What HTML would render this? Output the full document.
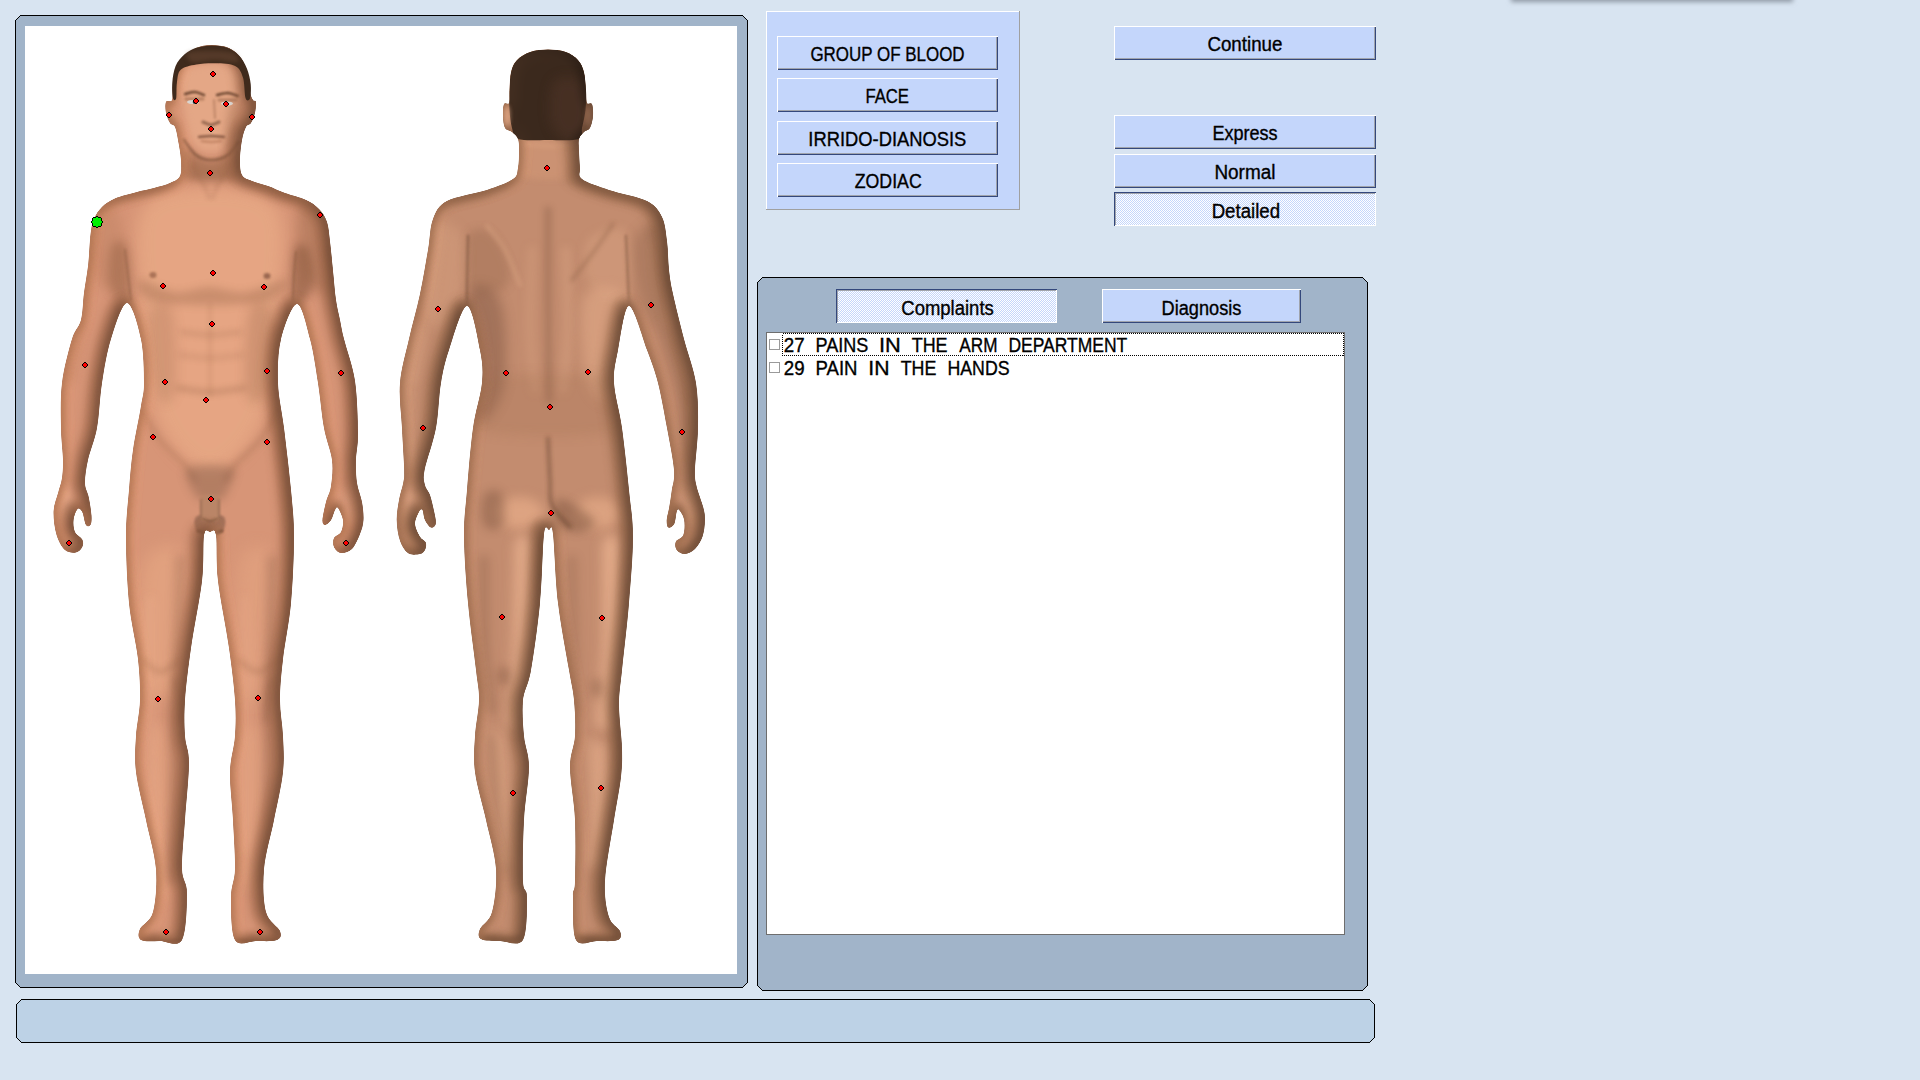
<!DOCTYPE html>
<html><head><meta charset="utf-8"><style>
html,body{margin:0;padding:0;width:1920px;height:1080px;overflow:hidden;background:#d8e4f1;font-family:"Liberation Sans",sans-serif;}
.abs{position:absolute}
.btn{position:absolute;box-sizing:border-box;display:flex;align-items:center;justify-content:center;color:#000;white-space:nowrap}
.pressed{background-color:#c4d6fb;background-image:repeating-conic-gradient(#ffffff 0 25%, #c4d6fb 0 50%);background-size:2px 2px}
.item{position:absolute;font-size:18.5px;color:#000;white-space:pre;line-height:23px}
</style></head><body>
<svg width="1920" height="1080" style="position:absolute;left:0;top:0" shape-rendering="crispEdges">
 <defs><linearGradient id="sh" x1="0" y1="0" x2="0" y2="1"><stop offset="0" stop-color="#9aa4b0"/><stop offset="1" stop-color="#d8e4f1"/></linearGradient>
 <filter id="shb" filterUnits="userSpaceOnUse" x="1400" y="-50" width="500" height="100"><feGaussianBlur stdDeviation="2.8"/></filter></defs>
 <rect x="1511" y="-12" width="282" height="14" fill="#8e98a4" filter="url(#shb)"/>
 <polygon points="20.5,15.5 742.5,15.5 747.5,20.5 747.5,982.5 742.5,987.5 20.5,987.5 15.5,982.5 15.5,20.5" fill="#a1b4c9" stroke="#000" stroke-width="1"/>
 <rect x="25" y="26" width="712" height="948" fill="#fff"/>
 <polygon points="762.5,277.5 1362.5,277.5 1367.5,282.5 1367.5,985.5 1362.5,990.5 762.5,990.5 757.5,985.5 757.5,282.5" fill="#a1b4c9" stroke="#000" stroke-width="1"/>
 <rect x="766" y="332" width="579" height="603" fill="#6e6e6e"/>
 <rect x="767" y="333" width="577" height="601" fill="#fff"/>
 <polygon points="21.5,999.5 1369.5,999.5 1374.5,1004.5 1374.5,1037.5 1369.5,1042.5 21.5,1042.5 16.5,1037.5 16.5,1004.5" fill="#bdd2e6" stroke="#000" stroke-width="1"/>
 <rect x="766" y="11" width="254" height="199" fill="#a0a0a0"/>
 <rect x="766" y="11" width="253" height="198" fill="#fff"/>
 <rect x="767" y="12" width="252" height="197" fill="#c4d6fb"/>
</svg>

<svg width="1920" height="1080" style="position:absolute;left:0;top:0">
<defs>
 <clipPath id="cf"><path d="M211.0,45.0C216.5,45.0 224.0,45.8 229.0,48.0C234.0,50.2 237.8,53.7 241.0,58.0C244.2,62.3 246.5,68.3 248.0,74.0C249.5,79.7 249.2,87.7 250.0,92.0C250.8,96.3 252.0,98.3 253.0,100.0C254.0,101.7 255.7,99.8 256.0,102.0C256.3,104.2 255.8,109.5 255.0,113.0C254.2,116.5 252.5,120.7 251.0,123.0C249.5,125.3 247.5,124.2 246.0,127.0C244.5,129.8 243.0,134.5 242.0,140.0C241.0,145.5 240.0,154.2 240.0,160.0C240.0,165.8 240.0,171.5 242.0,175.0C244.0,178.5 247.7,179.2 252.0,181.0C256.3,182.8 262.5,184.0 268.0,186.0C273.5,188.0 278.7,190.7 285.0,193.0C291.3,195.3 300.3,197.3 306.0,200.0C311.7,202.7 315.5,205.3 319.0,209.0C322.5,212.7 325.2,216.6 327.0,222.0C328.8,227.4 329.0,233.3 330.0,241.5C331.0,249.7 332.0,261.2 333.0,271.0C334.0,280.8 334.8,291.8 336.0,300.0C337.2,308.2 338.7,313.5 340.0,320.0C341.3,326.5 341.5,328.8 344.0,339.0C346.5,349.2 352.7,365.3 355.0,381.0C357.3,396.7 357.8,419.8 358.0,433.0C358.2,446.2 356.2,451.7 356.0,460.0C355.8,468.3 356.0,476.0 357.0,483.0C358.0,490.0 360.9,495.8 362.0,502.0C363.1,508.2 363.8,514.7 363.5,520.0C363.2,525.3 361.9,529.2 360.0,534.0C358.1,538.8 355.2,545.8 352.0,549.0C348.8,552.2 344.0,553.3 341.0,553.0C338.0,552.7 335.2,549.5 334.0,547.0C332.8,544.5 332.8,540.5 334.0,538.0C335.2,535.5 339.5,535.0 341.0,532.0C342.5,529.0 343.5,524.0 343.0,520.0C342.5,516.0 339.3,509.7 338.0,508.0C336.7,506.3 336.2,508.0 335.0,510.0C333.8,512.0 332.7,517.5 331.0,520.0C329.3,522.5 326.4,525.0 325.0,525.0C323.6,525.0 322.3,523.8 322.5,520.0C322.7,516.2 324.6,507.7 326.0,502.0C327.4,496.3 330.0,493.0 331.0,486.0C332.0,479.0 333.2,469.7 332.0,460.0C330.8,450.3 326.3,440.8 324.0,428.0C321.7,415.2 320.3,397.8 318.0,383.0C315.7,368.2 313.5,352.2 310.0,339.0C306.5,325.8 301.8,304.0 297.0,304.0C292.2,304.0 284.2,325.8 281.0,339.0C277.8,352.2 277.5,368.2 278.0,383.0C278.5,397.8 281.8,410.2 284.0,428.0C286.2,445.8 289.3,471.8 291.0,490.0C292.7,508.2 294.0,518.2 294.0,537.0C294.0,555.8 292.8,582.7 291.0,603.0C289.2,623.3 284.8,642.8 283.0,659.0C281.2,675.2 280.0,687.2 280.0,700.0C280.0,712.8 282.5,724.0 283.0,736.0C283.5,748.0 284.5,758.0 283.0,772.0C281.5,786.0 277.2,803.8 274.0,820.0C270.8,836.2 265.3,853.7 264.0,869.0C262.7,884.3 263.3,901.7 266.0,912.0C268.7,922.3 278.2,926.3 280.0,931.0C281.8,935.7 281.0,938.3 277.0,940.0C273.0,941.7 263.0,941.0 256.0,941.0C249.0,941.0 239.2,947.3 235.0,940.0C230.8,932.7 231.0,908.8 231.0,897.0C231.0,885.2 234.7,881.8 235.0,869.0C235.3,856.2 233.8,836.2 233.0,820.0C232.2,803.8 229.7,786.0 230.0,772.0C230.3,758.0 234.2,748.0 235.0,736.0C235.8,724.0 236.0,714.7 235.0,700.0C234.0,685.3 231.8,667.8 229.0,648.0C226.2,628.2 220.2,599.8 218.0,581.0C215.8,562.2 217.3,543.2 216.0,535.0C214.7,526.8 212.0,532.0 210.0,532.0C208.0,532.0 205.3,526.8 204.0,535.0C202.7,543.2 204.2,562.2 202.0,581.0C199.8,599.8 193.8,628.2 191.0,648.0C188.2,667.8 186.0,685.3 185.0,700.0C184.0,714.7 184.3,725.5 185.0,736.0C185.7,746.5 189.0,749.0 189.0,763.0C189.0,777.0 186.2,802.3 185.0,820.0C183.8,837.7 181.7,856.8 182.0,869.0C182.3,881.2 187.0,881.2 187.0,893.0C187.0,904.8 186.5,932.0 182.0,940.0C177.5,948.0 166.8,941.0 160.0,941.0C153.2,941.0 144.3,942.0 141.0,940.0C137.7,938.0 138.0,933.7 140.0,929.0C142.0,924.3 150.3,922.0 153.0,912.0C155.7,902.0 157.2,884.3 156.0,869.0C154.8,853.7 149.3,836.2 146.0,820.0C142.7,803.8 137.7,786.0 136.0,772.0C134.3,758.0 135.3,748.0 136.0,736.0C136.7,724.0 139.7,712.8 140.0,700.0C140.3,687.2 139.8,675.2 138.0,659.0C136.2,642.8 131.0,623.3 129.0,603.0C127.0,582.7 126.0,555.8 126.0,537.0C126.0,518.2 127.8,504.5 129.0,490.0C130.2,475.5 131.0,464.0 133.0,450.0C135.0,436.0 139.2,417.2 141.0,406.0C142.8,394.8 144.0,394.2 144.0,383.0C144.0,371.8 143.8,352.3 141.0,339.0C138.2,325.7 132.0,303.0 127.0,303.0C122.0,303.0 115.2,325.7 111.0,339.0C106.8,352.3 104.3,368.2 102.0,383.0C99.7,397.8 99.3,415.2 97.0,428.0C94.7,440.8 90.0,450.8 88.0,460.0C86.0,469.2 84.9,476.8 85.0,483.0C85.1,489.2 87.6,491.6 88.7,497.0C89.8,502.4 91.2,511.0 91.5,515.6C91.8,520.2 91.5,523.2 90.6,524.8C89.7,526.4 87.4,527.1 86.0,525.0C84.6,522.9 83.7,514.7 82.3,512.0C80.9,509.3 79.1,507.7 77.6,509.0C76.1,510.3 73.9,516.2 73.5,520.0C73.1,523.8 73.5,528.7 75.0,532.0C76.5,535.3 81.1,537.1 82.3,539.6C83.5,542.1 83.4,544.8 82.3,547.0C81.2,549.2 78.7,552.1 75.8,552.6C72.9,553.1 68.0,552.9 64.7,549.8C61.5,546.7 58.1,540.5 56.3,534.0C54.4,527.5 53.3,517.9 53.6,511.0C53.9,504.1 56.8,497.8 58.2,492.4C59.6,487.0 61.1,483.9 61.9,478.5C62.7,473.1 63.1,468.4 63.0,460.0C62.9,451.6 61.2,440.8 61.0,428.0C60.8,415.2 60.2,397.8 62.0,383.0C63.8,368.2 68.8,349.5 72.0,339.0C75.2,328.5 79.0,327.7 81.0,320.0C83.0,312.3 82.8,302.3 84.0,293.0C85.2,283.7 87.2,273.8 88.3,264.0C89.4,254.2 89.6,241.5 90.6,234.0C91.5,226.5 92.1,223.5 94.0,219.0C95.9,214.5 98.5,210.4 102.0,207.0C105.5,203.6 109.2,201.0 115.0,198.5C120.8,196.0 130.5,193.8 137.0,192.0C143.5,190.2 148.5,189.5 154.0,188.0C159.5,186.5 165.7,185.0 170.0,183.0C174.3,181.0 178.2,179.8 180.0,176.0C181.8,172.2 181.3,166.0 181.0,160.0C180.7,154.0 179.0,145.5 178.0,140.0C177.0,134.5 176.3,129.8 175.0,127.0C173.7,124.2 171.5,125.3 170.0,123.0C168.5,120.7 166.7,116.5 166.0,113.0C165.3,109.5 165.0,104.2 166.0,102.0C167.0,99.8 170.8,102.8 172.0,100.0C173.2,97.2 172.0,90.3 173.0,85.0C174.0,79.7 176.2,72.7 178.0,68.0C179.8,63.3 181.0,60.3 184.0,57.0C187.0,53.7 191.5,50.0 196.0,48.0C200.5,46.0 205.5,45.0 211.0,45.0Z"/></clipPath>
 <clipPath id="cb"><path d="M548.0,49.5C554.0,49.5 561.0,50.2 566.0,52.0C571.0,53.8 575.0,56.7 578.0,60.0C581.0,63.3 582.7,67.0 584.0,72.0C585.3,77.0 585.5,84.8 586.0,90.0C586.5,95.2 586.0,100.7 587.0,103.0C588.0,105.3 591.0,101.8 592.0,104.0C593.0,106.2 593.3,112.0 593.0,116.0C592.7,120.0 591.5,125.3 590.0,128.0C588.5,130.7 585.8,130.2 584.0,132.0C582.2,133.8 579.8,135.8 579.0,139.0C578.2,142.2 578.8,146.2 579.0,151.0C579.2,155.8 579.5,163.3 580.0,168.0C580.5,172.7 577.2,175.3 582.0,179.0C586.8,182.7 598.2,186.3 609.0,190.0C619.8,193.7 638.2,196.5 647.0,201.0C655.8,205.5 658.7,210.3 662.0,217.0C665.3,223.7 665.8,232.2 667.0,241.0C668.2,249.8 668.0,261.2 669.0,270.0C670.0,278.8 670.5,282.5 673.0,294.0C675.5,305.5 680.2,324.2 684.0,339.0C687.8,353.8 693.7,368.2 696.0,383.0C698.3,397.8 698.2,413.5 698.0,428.0C697.8,442.5 695.2,460.2 695.0,470.0C694.8,479.8 695.3,480.4 696.7,486.7C698.1,492.9 701.9,501.9 703.3,507.5C704.7,513.0 705.1,515.1 705.0,520.0C704.9,524.9 704.2,531.9 702.5,536.7C700.8,541.5 697.9,546.1 695.0,549.0C692.1,551.9 688.0,553.8 685.0,554.0C682.0,554.2 678.2,552.0 676.7,550.0C675.2,548.0 674.7,544.2 675.8,541.7C676.9,539.2 681.9,538.6 683.3,535.0C684.7,531.4 684.9,524.2 684.2,520.0C683.5,515.8 680.5,511.4 679.2,510.0C678.0,508.6 677.5,509.4 676.7,511.7C675.9,514.0 675.6,521.4 674.2,524.0C672.8,526.6 669.5,528.2 668.3,527.5C667.0,526.8 666.6,523.3 666.7,520.0C666.9,516.7 668.4,512.4 669.2,507.5C670.0,502.6 670.9,497.1 671.7,490.8C672.5,484.6 674.8,480.5 674.0,470.0C673.2,459.5 669.7,442.5 667.0,428.0C664.3,413.5 661.3,396.0 658.0,383.0C654.7,370.0 651.8,362.8 647.0,350.0C642.2,337.2 633.8,306.0 629.0,306.0C624.2,306.0 620.5,337.2 618.0,350.0C615.5,362.8 613.3,370.0 614.0,383.0C614.7,396.0 619.5,410.2 622.0,428.0C624.5,445.8 627.2,471.8 629.0,490.0C630.8,508.2 633.0,518.2 633.0,537.0C633.0,555.8 630.8,580.8 629.0,603.0C627.2,625.2 623.7,653.0 622.0,670.0C620.3,687.0 619.0,692.0 619.0,705.0C619.0,718.0 621.7,736.0 622.0,748.0C622.3,760.0 622.3,765.0 621.0,777.0C619.7,789.0 616.7,802.7 614.0,820.0C611.3,837.3 605.8,864.8 605.0,881.0C604.2,897.2 606.5,908.7 609.0,917.0C611.5,925.3 618.5,927.2 620.0,931.0C621.5,934.8 621.8,938.3 618.0,940.0C614.2,941.7 604.0,941.0 597.0,941.0C590.0,941.0 580.0,947.3 576.0,940.0C572.0,932.7 573.2,906.8 573.0,897.0C572.8,887.2 574.7,893.8 575.0,881.0C575.3,868.2 575.8,839.0 575.0,820.0C574.2,801.0 570.0,781.0 570.0,767.0C570.0,753.0 574.3,747.2 575.0,736.0C575.7,724.8 575.0,711.0 574.0,700.0C573.0,689.0 571.7,686.2 569.0,670.0C566.3,653.8 560.7,625.7 558.0,603.0C555.3,580.3 554.5,546.2 553.0,534.0C551.5,521.8 550.5,530.0 549.0,530.0C547.5,530.0 545.5,521.8 544.0,534.0C542.5,546.2 542.2,580.3 540.0,603.0C537.8,625.7 533.8,653.8 531.0,670.0C528.2,686.2 524.2,689.0 523.0,700.0C521.8,711.0 523.0,724.8 524.0,736.0C525.0,747.2 529.0,753.0 529.0,767.0C529.0,781.0 525.0,801.0 524.0,820.0C523.0,839.0 522.5,868.2 523.0,881.0C523.5,893.8 527.0,887.2 527.0,897.0C527.0,906.8 527.5,932.7 523.0,940.0C518.5,947.3 507.0,941.2 500.0,941.0C493.0,940.8 484.3,941.0 481.0,939.0C477.7,937.0 478.2,933.5 480.0,929.0C481.8,924.5 489.3,922.0 492.0,912.0C494.7,902.0 497.0,884.3 496.0,869.0C495.0,853.7 489.5,836.2 486.0,820.0C482.5,803.8 476.8,786.0 475.0,772.0C473.2,758.0 474.3,748.0 475.0,736.0C475.7,724.0 478.8,711.0 479.0,700.0C479.2,689.0 477.8,686.2 476.0,670.0C474.2,653.8 470.0,625.2 468.0,603.0C466.0,580.8 464.2,555.8 464.0,537.0C463.8,518.2 465.5,508.2 467.0,490.0C468.5,471.8 470.5,445.8 473.0,428.0C475.5,410.2 480.8,396.0 482.0,383.0C483.2,370.0 482.5,362.8 480.0,350.0C477.5,337.2 472.2,306.0 467.0,306.0C461.8,306.0 453.3,337.2 449.0,350.0C444.7,362.8 443.2,370.0 441.0,383.0C438.8,396.0 438.7,413.5 436.0,428.0C433.3,442.5 426.4,460.5 424.6,470.0C422.8,479.5 424.1,480.8 425.0,485.0C425.9,489.2 428.5,490.6 430.0,495.0C431.5,499.4 433.2,506.9 434.2,511.7C435.2,516.5 436.4,521.4 435.8,524.0C435.2,526.6 432.6,528.2 430.8,527.5C429.0,526.8 426.4,522.9 425.0,520.0C423.6,517.1 423.5,511.4 422.5,510.0C421.5,508.6 420.2,509.4 419.0,511.7C417.8,514.0 414.8,519.8 415.0,524.0C415.2,528.2 418.2,533.6 420.0,536.7C421.8,539.8 425.0,540.3 425.8,542.5C426.6,544.7 426.0,548.1 425.0,550.0C424.0,551.9 422.8,553.5 420.0,554.0C417.2,554.5 411.6,555.5 408.3,553.3C405.0,551.1 401.9,546.3 400.0,540.8C398.1,535.2 396.8,527.0 396.7,520.0C396.6,513.0 398.1,505.2 399.2,499.0C400.3,492.8 402.5,487.3 403.3,482.5C404.1,477.7 404.4,479.1 404.2,470.0C404.0,460.9 402.7,442.5 402.0,428.0C401.3,413.5 398.8,397.8 400.0,383.0C401.2,368.2 405.7,353.8 409.0,339.0C412.3,324.2 416.8,308.8 420.0,294.0C423.2,279.2 425.8,262.5 428.0,250.0C430.2,237.5 429.8,227.2 433.0,219.0C436.2,210.8 438.0,205.8 447.0,201.0C456.0,196.2 476.0,193.7 487.0,190.0C498.0,186.3 507.8,182.7 513.0,179.0C518.2,175.3 517.0,172.7 518.0,168.0C519.0,163.3 519.0,155.8 519.0,151.0C519.0,146.2 519.2,142.2 518.0,139.0C516.8,135.8 514.2,133.8 512.0,132.0C509.8,130.2 506.5,130.7 505.0,128.0C503.5,125.3 503.2,120.0 503.0,116.0C502.8,112.0 503.0,106.2 504.0,104.0C505.0,101.8 508.1,105.3 509.0,103.0C509.9,100.7 509.2,95.2 509.5,90.0C509.8,84.8 509.8,77.0 511.0,72.0C512.2,67.0 513.8,63.3 517.0,60.0C520.2,56.7 524.8,53.8 530.0,52.0C535.2,50.2 542.0,49.5 548.0,49.5Z"/></clipPath>
 <filter id="bl1" filterUnits="userSpaceOnUse" x="0" y="0" width="1920" height="1080"><feGaussianBlur stdDeviation="1"/></filter>
 <filter id="bl2" filterUnits="userSpaceOnUse" x="0" y="0" width="1920" height="1080"><feGaussianBlur stdDeviation="2"/></filter>
 <filter id="bl3" filterUnits="userSpaceOnUse" x="0" y="0" width="1920" height="1080"><feGaussianBlur stdDeviation="3"/></filter>
 <filter id="bl4" filterUnits="userSpaceOnUse" x="0" y="0" width="1920" height="1080"><feGaussianBlur stdDeviation="4"/></filter>
 <filter id="bl5" filterUnits="userSpaceOnUse" x="0" y="0" width="1920" height="1080"><feGaussianBlur stdDeviation="5"/></filter>
 <filter id="bl6" filterUnits="userSpaceOnUse" x="0" y="0" width="1920" height="1080"><feGaussianBlur stdDeviation="6"/></filter>
 <filter id="bl7" filterUnits="userSpaceOnUse" x="0" y="0" width="1920" height="1080"><feGaussianBlur stdDeviation="7"/></filter>
 <filter id="bl8" filterUnits="userSpaceOnUse" x="0" y="0" width="1920" height="1080"><feGaussianBlur stdDeviation="8"/></filter>
 <filter id="bl9" filterUnits="userSpaceOnUse" x="0" y="0" width="1920" height="1080"><feGaussianBlur stdDeviation="9"/></filter>
 <filter id="bl10" filterUnits="userSpaceOnUse" x="0" y="0" width="1920" height="1080"><feGaussianBlur stdDeviation="10"/></filter>
 <filter id="lit" filterUnits="userSpaceOnUse" x="0" y="0" width="1920" height="1080" color-interpolation-filters="sRGB">
  <feGaussianBlur in="SourceAlpha" stdDeviation="6" result="b"/>
  <feDiffuseLighting in="b" surfaceScale="3" diffuseConstant="1" lighting-color="#fff" result="light">
   <feDistantLight azimuth="190" elevation="65"/>
  </feDiffuseLighting>
  <feComposite in="SourceGraphic" in2="light" operator="arithmetic" k1="1.0" k2="0.1" k3="0" k4="0" result="lit"/>
  <feComposite in="lit" in2="SourceAlpha" operator="in"/>
 </filter>
</defs>
<g filter="url(#lit)"><g clip-path="url(#cf)">
 <rect x="40" y="40" width="340" height="910" fill="#d69476"/>
 <path d="M150.0,200.0C171.7,183.3 248.3,183.3 270.0,200.0C291.7,216.7 281.3,263.3 280.0,300.0C278.7,336.7 273.7,391.7 262.0,420.0C250.3,448.3 227.3,470.0 210.0,470.0C192.7,470.0 169.7,448.3 158.0,420.0C146.3,391.7 141.3,336.7 140.0,300.0C138.7,263.3 128.3,216.7 150.0,200.0Z" fill="#eeb08a" filter="url(#bl8)" opacity="0.6"/><path d="M145.0,560.0C152.5,543.3 179.2,540.0 185.0,560.0C190.8,580.0 184.2,656.7 180.0,680.0C175.8,703.3 166.7,703.3 160.0,700.0C153.3,696.7 142.5,683.3 140.0,660.0C137.5,636.7 137.5,576.7 145.0,560.0Z" fill="#eaac86" filter="url(#bl8)" opacity="0.5"/><path d="M240.0,560.0C246.2,540.0 270.0,543.3 275.0,560.0C280.0,576.7 273.3,636.7 270.0,660.0C266.7,683.3 260.3,696.7 255.0,700.0C249.7,703.3 240.5,703.3 238.0,680.0C235.5,656.7 233.8,580.0 240.0,560.0Z" fill="#eaac86" filter="url(#bl8)" opacity="0.4"/><path d="M150.0,740.0C153.7,720.0 168.7,716.7 172.0,740.0C175.3,763.3 172.3,853.3 170.0,880.0C167.7,906.7 161.3,903.3 158.0,900.0C154.7,896.7 151.3,886.7 150.0,860.0C148.7,833.3 146.3,760.0 150.0,740.0Z" fill="#eaac86" filter="url(#bl6)" opacity="0.4"/><path d="M242.0,740.0C246.2,720.0 261.7,720.0 265.0,740.0C268.3,760.0 264.5,835.0 262.0,860.0C259.5,885.0 253.7,890.0 250.0,890.0C246.3,890.0 241.3,885.0 240.0,860.0C238.7,835.0 237.8,760.0 242.0,740.0Z" fill="#eaac86" filter="url(#bl6)" opacity="0.35"/><path d="M140.0,280.0C144.3,278.7 164.5,290.8 176.0,292.0C187.5,293.2 197.7,287.0 209.0,287.0C220.3,287.0 231.3,293.2 244.0,292.0C256.7,290.8 280.7,278.7 285.0,280.0C289.3,281.3 282.5,295.8 270.0,300.0C257.5,304.2 230.0,305.0 210.0,305.0C190.0,305.0 161.7,304.2 150.0,300.0C138.3,295.8 135.7,281.3 140.0,280.0Z" fill="#8a5a3e" filter="url(#bl4)" opacity="0.3"/><ellipse cx="153" cy="275" rx="3.5" ry="3" fill="#7a4a34" filter="url(#bl1)" opacity="0.55"/><ellipse cx="267" cy="276" rx="3.5" ry="3" fill="#6a4030" filter="url(#bl1)" opacity="0.6"/><path d="M182.0,332.0C186.7,332.5 200.3,335.0 210.0,335.0C219.7,335.0 235.0,332.5 240.0,332.0" fill="none" stroke="#8a5a3e" stroke-width="4" stroke-linecap="round" filter="url(#bl3)" opacity="0.25"/><path d="M180.0,355.0C185.0,355.5 199.7,358.0 210.0,358.0C220.3,358.0 236.7,355.5 242.0,355.0" fill="none" stroke="#8a5a3e" stroke-width="4" stroke-linecap="round" filter="url(#bl3)" opacity="0.2"/><path d="M178.0,388.0C183.3,388.7 199.0,392.0 210.0,392.0C221.0,392.0 238.3,388.7 244.0,388.0" fill="none" stroke="#8a5a3e" stroke-width="5" stroke-linecap="round" filter="url(#bl3)" opacity="0.3"/><path d="M210.0,305.0C210.0,320.0 210.0,380.0 210.0,395.0" fill="none" stroke="#8a5a3e" stroke-width="3" stroke-linecap="round" filter="url(#bl2)" opacity="0.15"/><path d="M150.0,310.0C154.0,301.7 167.8,296.7 172.0,310.0C176.2,323.3 177.0,375.0 175.0,390.0C173.0,405.0 164.5,405.0 160.0,400.0C155.5,395.0 149.7,375.0 148.0,360.0C146.3,345.0 146.0,318.3 150.0,310.0Z" fill="#8a5a3e" filter="url(#bl6)" opacity="0.2"/><path d="M250.0,310.0C254.3,296.7 268.0,301.7 272.0,310.0C276.0,318.3 275.7,345.0 274.0,360.0C272.3,375.0 266.7,395.0 262.0,400.0C257.3,405.0 248.0,405.0 246.0,390.0C244.0,375.0 245.7,323.3 250.0,310.0Z" fill="#8a5a3e" filter="url(#bl6)" opacity="0.25"/><path d="M142.0,410.0C145.0,415.0 152.8,430.8 160.0,440.0C167.2,449.2 179.2,458.3 185.0,465.0C190.8,471.7 193.3,477.5 195.0,480.0" fill="none" stroke="#8a5a3e" stroke-width="4" stroke-linecap="round" filter="url(#bl3)" opacity="0.3"/><path d="M278.0,410.0C275.0,415.0 267.2,430.8 260.0,440.0C252.8,449.2 240.7,458.3 235.0,465.0C229.3,471.7 227.5,477.5 226.0,480.0" fill="none" stroke="#8a5a3e" stroke-width="4" stroke-linecap="round" filter="url(#bl3)" opacity="0.35"/><path d="M112.0,245.0C115.2,239.7 123.8,238.8 127.0,248.0C130.2,257.2 132.5,291.3 131.0,300.0C129.5,308.7 121.8,303.3 118.0,300.0C114.2,296.7 109.0,289.2 108.0,280.0C107.0,270.8 108.8,250.3 112.0,245.0Z" fill="#8a5a3e" filter="url(#bl5)" opacity="0.45"/><path d="M308.0,248.0C304.7,243.0 296.7,241.3 294.0,250.0C291.3,258.7 290.2,291.7 292.0,300.0C293.8,308.3 301.3,303.3 305.0,300.0C308.7,296.7 313.5,288.7 314.0,280.0C314.5,271.3 311.3,253.0 308.0,248.0Z" fill="#7a4e36" filter="url(#bl5)" opacity="0.5"/><path d="M125.0,250.0C125.5,254.2 127.0,266.7 128.0,275.0C129.0,283.3 130.5,295.8 131.0,300.0" fill="none" stroke="#6e4630" stroke-width="2" stroke-linecap="round" filter="url(#bl1)" opacity="0.35"/><path d="M296.0,252.0C295.7,255.8 294.5,267.0 294.0,275.0C293.5,283.0 293.2,295.8 293.0,300.0" fill="none" stroke="#6e4630" stroke-width="2" stroke-linecap="round" filter="url(#bl1)" opacity="0.35"/><path d="M300.0,205.0C304.0,198.3 316.7,204.2 322.0,210.0C327.3,215.8 330.7,226.7 332.0,240.0C333.3,253.3 333.7,282.5 330.0,290.0C326.3,297.5 315.3,291.7 310.0,285.0C304.7,278.3 299.7,263.3 298.0,250.0C296.3,236.7 296.0,211.7 300.0,205.0Z" fill="#8a5a3e" filter="url(#bl6)" opacity="0.35"/><path d="M92.0,215.0C95.7,207.5 106.5,200.8 112.0,205.0C117.5,209.2 123.3,226.7 125.0,240.0C126.7,253.3 126.2,277.5 122.0,285.0C117.8,292.5 105.3,290.8 100.0,285.0C94.7,279.2 91.3,261.7 90.0,250.0C88.7,238.3 88.3,222.5 92.0,215.0Z" fill="#a87050" filter="url(#bl6)" opacity="0.25"/><path d="M92.0,230.0C91.0,241.7 89.7,275.0 86.0,300.0C82.3,325.0 72.7,366.7 70.0,380.0" fill="none" stroke="#a87050" stroke-width="6" stroke-linecap="round" filter="url(#bl4)" opacity="0.3"/><path d="M330.0,250.0C332.5,261.7 340.3,295.0 345.0,320.0C349.7,345.0 355.8,376.7 358.0,400.0C360.2,423.3 358.0,450.0 358.0,460.0" fill="none" stroke="#8a5a3e" stroke-width="8" stroke-linecap="round" filter="url(#bl4)" opacity="0.45"/><path d="M278.0,330.0C277.7,341.7 274.7,375.0 276.0,400.0C277.3,425.0 283.3,453.3 286.0,480.0C288.7,506.7 292.0,530.0 292.0,560.0C292.0,590.0 287.0,643.3 286.0,660.0" fill="none" stroke="#8a5a3e" stroke-width="8" stroke-linecap="round" filter="url(#bl4)" opacity="0.35"/><path d="M185.0,148.0C189.8,145.8 202.3,162.0 211.0,162.0C219.7,162.0 232.2,145.8 237.0,148.0C241.8,150.2 244.3,169.7 240.0,175.0C235.7,180.3 220.7,180.0 211.0,180.0C201.3,180.0 186.3,180.3 182.0,175.0C177.7,169.7 180.2,150.2 185.0,148.0Z" fill="#8a5a3e" filter="url(#bl3)" opacity="0.35"/><path d="M192.0,165.0C194.0,168.3 201.2,179.5 204.0,185.0C206.8,190.5 208.2,195.8 209.0,198.0" fill="none" stroke="#8a5a3e" stroke-width="3" stroke-linecap="round" filter="url(#bl2)" opacity="0.2"/><path d="M230.0,165.0C228.0,168.3 220.8,179.5 218.0,185.0C215.2,190.5 213.8,195.8 213.0,198.0" fill="none" stroke="#8a5a3e" stroke-width="3" stroke-linecap="round" filter="url(#bl2)" opacity="0.2"/><path d="M188.0,468.0C194.7,464.3 225.3,464.3 232.0,468.0C238.7,471.7 230.0,484.7 228.0,490.0C226.0,495.3 224.3,498.3 220.0,500.0C215.7,501.7 206.7,501.7 202.0,500.0C197.3,498.3 194.3,495.3 192.0,490.0C189.7,484.7 181.3,471.7 188.0,468.0Z" fill="#7e5a44" filter="url(#bl5)" opacity="0.4"/><path d="M197.0,516.0C201.3,513.5 218.7,513.5 223.0,516.0C227.3,518.5 224.8,527.8 223.0,531.0C221.2,534.2 216.3,535.0 212.0,535.0C207.7,535.0 199.5,534.2 197.0,531.0C194.5,527.8 192.7,518.5 197.0,516.0Z" fill="#a27058" filter="url(#bl1)"/><path d="M198.0,531.0C200.2,531.5 207.0,534.0 211.0,534.0C215.0,534.0 220.2,531.5 222.0,531.0" fill="none" stroke="#5e3c2a" stroke-width="3" stroke-linecap="round" filter="url(#bl1)" opacity="0.7"/><path d="M202.0,497.0C204.8,493.3 215.2,493.3 218.0,497.0C220.8,500.7 220.3,515.0 219.0,519.0C217.7,523.0 213.0,521.0 210.0,521.0C207.0,521.0 202.3,523.0 201.0,519.0C199.7,515.0 199.2,500.7 202.0,497.0Z" fill="#b98466" filter="url(#bl1)"/><path d="M203.0,519.0C204.2,519.3 207.7,521.0 210.0,521.0C212.3,521.0 215.8,519.3 217.0,519.0" fill="none" stroke="#6e4a34" stroke-width="2" stroke-linecap="round" filter="url(#bl1)" opacity="0.6"/><path d="M201.0,500.0C201.0,503.0 201.0,515.0 201.0,518.0" fill="none" stroke="#7e5a44" stroke-width="2" stroke-linecap="round" filter="url(#bl1)" opacity="0.45"/><path d="M219.0,500.0C219.0,503.0 219.0,515.0 219.0,518.0" fill="none" stroke="#7e5a44" stroke-width="2" stroke-linecap="round" filter="url(#bl1)" opacity="0.45"/><path d="M180.0,560.0C179.5,575.0 178.0,623.3 177.0,650.0C176.0,676.7 174.5,695.0 174.0,720.0C173.5,745.0 174.3,773.3 174.0,800.0C173.7,826.7 172.3,866.7 172.0,880.0" fill="none" stroke="#7e5240" stroke-width="10" stroke-linecap="round" filter="url(#bl5)" opacity="0.25"/><path d="M272.0,560.0C271.7,575.0 270.7,623.3 270.0,650.0C269.3,676.7 268.3,695.0 268.0,720.0C267.7,745.0 269.0,773.3 268.0,800.0C267.0,826.7 263.0,866.7 262.0,880.0" fill="none" stroke="#7e5240" stroke-width="10" stroke-linecap="round" filter="url(#bl5)" opacity="0.3"/><path d="M150.0,600.0C150.0,613.3 149.7,653.3 150.0,680.0C150.3,706.7 151.0,731.7 152.0,760.0C153.0,788.3 155.3,835.0 156.0,850.0" fill="none" stroke="#f0b494" stroke-width="8" stroke-linecap="round" filter="url(#bl5)" opacity="0.3"/><path d="M245.0,600.0C245.3,613.3 247.0,653.3 247.0,680.0C247.0,706.7 245.3,731.7 245.0,760.0C244.7,788.3 245.0,835.0 245.0,850.0" fill="none" stroke="#f0b494" stroke-width="8" stroke-linecap="round" filter="url(#bl5)" opacity="0.25"/><path d="M176.0,680.0C176.7,683.3 179.3,693.3 180.0,700.0C180.7,706.7 180.0,716.7 180.0,720.0" fill="none" stroke="#6e4a34" stroke-width="4" stroke-linecap="round" filter="url(#bl3)" opacity="0.3"/><path d="M272.0,680.0C271.3,683.3 269.0,693.3 268.0,700.0C267.0,706.7 266.3,716.7 266.0,720.0" fill="none" stroke="#6e4a34" stroke-width="4" stroke-linecap="round" filter="url(#bl3)" opacity="0.3"/><path d="M143.0,660.0C145.8,662.0 153.8,672.0 160.0,672.0C166.2,672.0 176.7,662.0 180.0,660.0" fill="none" stroke="#8a5a3e" stroke-width="4" stroke-linecap="round" filter="url(#bl3)" opacity="0.3"/><path d="M238.0,660.0C241.3,662.0 251.3,672.0 258.0,672.0C264.7,672.0 274.7,662.0 278.0,660.0" fill="none" stroke="#8a5a3e" stroke-width="4" stroke-linecap="round" filter="url(#bl3)" opacity="0.3"/><path d="M198.0,560.0C197.0,575.0 194.2,623.3 192.0,650.0C189.8,676.7 186.2,708.3 185.0,720.0" fill="none" stroke="#8a5a3e" stroke-width="5" stroke-linecap="round" filter="url(#bl3)" opacity="0.25"/><ellipse cx="67" cy="505" rx="9" ry="20" fill="#eeb494" filter="url(#bl5)" opacity="0.5"/><ellipse cx="350" cy="505" rx="9" ry="20" fill="#eeb494" filter="url(#bl5)" opacity="0.45"/><path d="M143.0,940.0C145.8,940.3 153.5,942.0 160.0,942.0C166.5,942.0 178.3,940.3 182.0,940.0" fill="none" stroke="#7a4a34" stroke-width="3" stroke-linecap="round" filter="url(#bl1)" opacity="0.5"/><path d="M237.0,940.0C240.5,940.3 251.5,942.0 258.0,942.0C264.5,942.0 273.0,940.3 276.0,940.0" fill="none" stroke="#7a4a34" stroke-width="3" stroke-linecap="round" filter="url(#bl1)" opacity="0.5"/><path d="M184.0,70.0C192.7,60.8 229.3,60.8 238.0,70.0C246.7,79.2 238.2,112.0 236.0,125.0C233.8,138.0 229.2,143.5 225.0,148.0C220.8,152.5 215.7,152.0 211.0,152.0C206.3,152.0 201.2,152.5 197.0,148.0C192.8,143.5 188.2,138.0 186.0,125.0C183.8,112.0 175.3,79.2 184.0,70.0Z" fill="#f0b894" filter="url(#bl4)" opacity="0.5"/><path d="M230.0,105.0C233.0,97.8 242.0,100.0 244.0,105.0C246.0,110.0 243.7,127.5 242.0,135.0C240.3,142.5 236.7,147.8 234.0,150.0C231.3,152.2 226.7,155.5 226.0,148.0C225.3,140.5 227.0,112.2 230.0,105.0Z" fill="#8a5a3e" filter="url(#bl4)" opacity="0.3"/><path d="M185.0,94.0C186.7,93.7 191.8,91.8 195.0,92.0C198.2,92.2 202.5,94.5 204.0,95.0" fill="none" stroke="#5a3826" stroke-width="2.5" stroke-linecap="round" filter="url(#bl1)" opacity="0.85"/><path d="M217.0,95.0C218.8,94.7 224.5,92.8 228.0,93.0C231.5,93.2 236.3,95.5 238.0,96.0" fill="none" stroke="#5a3826" stroke-width="2.5" stroke-linecap="round" filter="url(#bl1)" opacity="0.85"/><path d="M186.0,99.0C188.8,99.0 200.2,99.0 203.0,99.0" fill="none" stroke="#8a5a3e" stroke-width="3" stroke-linecap="round" filter="url(#bl1)" opacity="0.5"/><path d="M219.0,100.0C221.8,100.0 233.2,100.0 236.0,100.0" fill="none" stroke="#8a5a3e" stroke-width="3" stroke-linecap="round" filter="url(#bl1)" opacity="0.5"/><ellipse cx="193" cy="102" rx="6" ry="2" fill="#d8d4d0"/><ellipse cx="227" cy="103.5" rx="6" ry="2" fill="#d8d4d0"/><ellipse cx="195" cy="102" rx="2.3" ry="2" fill="#2a3434"/><ellipse cx="226" cy="103.5" rx="2.3" ry="2" fill="#2a3434"/><path d="M214.0,100.0C214.2,103.0 214.8,115.0 215.0,118.0" fill="none" stroke="#8a5a3e" stroke-width="2" stroke-linecap="round" filter="url(#bl1)" opacity="0.4"/><path d="M203.0,122.0C204.3,122.5 208.3,125.0 211.0,125.0C213.7,125.0 217.7,122.5 219.0,122.0" fill="none" stroke="#5a3826" stroke-width="3" stroke-linecap="round" filter="url(#bl1)" opacity="0.55"/><path d="M199.0,137.0C201.0,136.8 206.8,136.0 211.0,136.0C215.2,136.0 221.8,136.8 224.0,137.0" fill="none" stroke="#6e4430" stroke-width="2.5" stroke-linecap="round" filter="url(#bl1)" opacity="0.75"/><path d="M202.0,141.0C203.5,141.2 207.8,142.0 211.0,142.0C214.2,142.0 219.3,141.2 221.0,141.0" fill="none" stroke="#b87a5a" stroke-width="3" stroke-linecap="round" filter="url(#bl1)" opacity="0.6"/><path d="M184.0,140.0C186.0,142.5 191.5,151.7 196.0,155.0C200.5,158.3 205.7,160.0 211.0,160.0C216.3,160.0 223.5,158.0 228.0,155.0C232.5,152.0 236.3,144.2 238.0,142.0" fill="none" stroke="#5e3c2a" stroke-width="3" stroke-linecap="round" filter="url(#bl1)" opacity="0.45"/><path d="M190.0,158.0C194.5,155.5 203.7,163.0 211.0,163.0C218.3,163.0 229.5,155.5 234.0,158.0C238.5,160.5 241.8,174.0 238.0,178.0C234.2,182.0 220.0,182.0 211.0,182.0C202.0,182.0 187.5,182.0 184.0,178.0C180.5,174.0 185.5,160.5 190.0,158.0Z" fill="#8a5a3e" filter="url(#bl4)" opacity="0.3"/>
 <path d="M211.0,45.0C216.5,45.0 224.0,45.8 229.0,48.0C234.0,50.2 237.8,53.7 241.0,58.0C244.2,62.3 246.5,68.3 248.0,74.0C249.5,79.7 249.2,87.7 250.0,92.0C250.8,96.3 252.0,98.3 253.0,100.0C254.0,101.7 255.7,99.8 256.0,102.0C256.3,104.2 255.8,109.5 255.0,113.0C254.2,116.5 252.5,120.7 251.0,123.0C249.5,125.3 247.5,124.2 246.0,127.0C244.5,129.8 243.0,134.5 242.0,140.0C241.0,145.5 240.0,154.2 240.0,160.0C240.0,165.8 240.0,171.5 242.0,175.0C244.0,178.5 247.7,179.2 252.0,181.0C256.3,182.8 262.5,184.0 268.0,186.0C273.5,188.0 278.7,190.7 285.0,193.0C291.3,195.3 300.3,197.3 306.0,200.0C311.7,202.7 315.5,205.3 319.0,209.0C322.5,212.7 325.2,216.6 327.0,222.0C328.8,227.4 329.0,233.3 330.0,241.5C331.0,249.7 332.0,261.2 333.0,271.0C334.0,280.8 334.8,291.8 336.0,300.0C337.2,308.2 338.7,313.5 340.0,320.0C341.3,326.5 341.5,328.8 344.0,339.0C346.5,349.2 352.7,365.3 355.0,381.0C357.3,396.7 357.8,419.8 358.0,433.0C358.2,446.2 356.2,451.7 356.0,460.0C355.8,468.3 356.0,476.0 357.0,483.0C358.0,490.0 360.9,495.8 362.0,502.0C363.1,508.2 363.8,514.7 363.5,520.0C363.2,525.3 361.9,529.2 360.0,534.0C358.1,538.8 355.2,545.8 352.0,549.0C348.8,552.2 344.0,553.3 341.0,553.0C338.0,552.7 335.2,549.5 334.0,547.0C332.8,544.5 332.8,540.5 334.0,538.0C335.2,535.5 339.5,535.0 341.0,532.0C342.5,529.0 343.5,524.0 343.0,520.0C342.5,516.0 339.3,509.7 338.0,508.0C336.7,506.3 336.2,508.0 335.0,510.0C333.8,512.0 332.7,517.5 331.0,520.0C329.3,522.5 326.4,525.0 325.0,525.0C323.6,525.0 322.3,523.8 322.5,520.0C322.7,516.2 324.6,507.7 326.0,502.0C327.4,496.3 330.0,493.0 331.0,486.0C332.0,479.0 333.2,469.7 332.0,460.0C330.8,450.3 326.3,440.8 324.0,428.0C321.7,415.2 320.3,397.8 318.0,383.0C315.7,368.2 313.5,352.2 310.0,339.0C306.5,325.8 301.8,304.0 297.0,304.0C292.2,304.0 284.2,325.8 281.0,339.0C277.8,352.2 277.5,368.2 278.0,383.0C278.5,397.8 281.8,410.2 284.0,428.0C286.2,445.8 289.3,471.8 291.0,490.0C292.7,508.2 294.0,518.2 294.0,537.0C294.0,555.8 292.8,582.7 291.0,603.0C289.2,623.3 284.8,642.8 283.0,659.0C281.2,675.2 280.0,687.2 280.0,700.0C280.0,712.8 282.5,724.0 283.0,736.0C283.5,748.0 284.5,758.0 283.0,772.0C281.5,786.0 277.2,803.8 274.0,820.0C270.8,836.2 265.3,853.7 264.0,869.0C262.7,884.3 263.3,901.7 266.0,912.0C268.7,922.3 278.2,926.3 280.0,931.0C281.8,935.7 281.0,938.3 277.0,940.0C273.0,941.7 263.0,941.0 256.0,941.0C249.0,941.0 239.2,947.3 235.0,940.0C230.8,932.7 231.0,908.8 231.0,897.0C231.0,885.2 234.7,881.8 235.0,869.0C235.3,856.2 233.8,836.2 233.0,820.0C232.2,803.8 229.7,786.0 230.0,772.0C230.3,758.0 234.2,748.0 235.0,736.0C235.8,724.0 236.0,714.7 235.0,700.0C234.0,685.3 231.8,667.8 229.0,648.0C226.2,628.2 220.2,599.8 218.0,581.0C215.8,562.2 217.3,543.2 216.0,535.0C214.7,526.8 212.0,532.0 210.0,532.0C208.0,532.0 205.3,526.8 204.0,535.0C202.7,543.2 204.2,562.2 202.0,581.0C199.8,599.8 193.8,628.2 191.0,648.0C188.2,667.8 186.0,685.3 185.0,700.0C184.0,714.7 184.3,725.5 185.0,736.0C185.7,746.5 189.0,749.0 189.0,763.0C189.0,777.0 186.2,802.3 185.0,820.0C183.8,837.7 181.7,856.8 182.0,869.0C182.3,881.2 187.0,881.2 187.0,893.0C187.0,904.8 186.5,932.0 182.0,940.0C177.5,948.0 166.8,941.0 160.0,941.0C153.2,941.0 144.3,942.0 141.0,940.0C137.7,938.0 138.0,933.7 140.0,929.0C142.0,924.3 150.3,922.0 153.0,912.0C155.7,902.0 157.2,884.3 156.0,869.0C154.8,853.7 149.3,836.2 146.0,820.0C142.7,803.8 137.7,786.0 136.0,772.0C134.3,758.0 135.3,748.0 136.0,736.0C136.7,724.0 139.7,712.8 140.0,700.0C140.3,687.2 139.8,675.2 138.0,659.0C136.2,642.8 131.0,623.3 129.0,603.0C127.0,582.7 126.0,555.8 126.0,537.0C126.0,518.2 127.8,504.5 129.0,490.0C130.2,475.5 131.0,464.0 133.0,450.0C135.0,436.0 139.2,417.2 141.0,406.0C142.8,394.8 144.0,394.2 144.0,383.0C144.0,371.8 143.8,352.3 141.0,339.0C138.2,325.7 132.0,303.0 127.0,303.0C122.0,303.0 115.2,325.7 111.0,339.0C106.8,352.3 104.3,368.2 102.0,383.0C99.7,397.8 99.3,415.2 97.0,428.0C94.7,440.8 90.0,450.8 88.0,460.0C86.0,469.2 84.9,476.8 85.0,483.0C85.1,489.2 87.6,491.6 88.7,497.0C89.8,502.4 91.2,511.0 91.5,515.6C91.8,520.2 91.5,523.2 90.6,524.8C89.7,526.4 87.4,527.1 86.0,525.0C84.6,522.9 83.7,514.7 82.3,512.0C80.9,509.3 79.1,507.7 77.6,509.0C76.1,510.3 73.9,516.2 73.5,520.0C73.1,523.8 73.5,528.7 75.0,532.0C76.5,535.3 81.1,537.1 82.3,539.6C83.5,542.1 83.4,544.8 82.3,547.0C81.2,549.2 78.7,552.1 75.8,552.6C72.9,553.1 68.0,552.9 64.7,549.8C61.5,546.7 58.1,540.5 56.3,534.0C54.4,527.5 53.3,517.9 53.6,511.0C53.9,504.1 56.8,497.8 58.2,492.4C59.6,487.0 61.1,483.9 61.9,478.5C62.7,473.1 63.1,468.4 63.0,460.0C62.9,451.6 61.2,440.8 61.0,428.0C60.8,415.2 60.2,397.8 62.0,383.0C63.8,368.2 68.8,349.5 72.0,339.0C75.2,328.5 79.0,327.7 81.0,320.0C83.0,312.3 82.8,302.3 84.0,293.0C85.2,283.7 87.2,273.8 88.3,264.0C89.4,254.2 89.6,241.5 90.6,234.0C91.5,226.5 92.1,223.5 94.0,219.0C95.9,214.5 98.5,210.4 102.0,207.0C105.5,203.6 109.2,201.0 115.0,198.5C120.8,196.0 130.5,193.8 137.0,192.0C143.5,190.2 148.5,189.5 154.0,188.0C159.5,186.5 165.7,185.0 170.0,183.0C174.3,181.0 178.2,179.8 180.0,176.0C181.8,172.2 181.3,166.0 181.0,160.0C180.7,154.0 179.0,145.5 178.0,140.0C177.0,134.5 176.3,129.8 175.0,127.0C173.7,124.2 171.5,125.3 170.0,123.0C168.5,120.7 166.7,116.5 166.0,113.0C165.3,109.5 165.0,104.2 166.0,102.0C167.0,99.8 170.8,102.8 172.0,100.0C173.2,97.2 172.0,90.3 173.0,85.0C174.0,79.7 176.2,72.7 178.0,68.0C179.8,63.3 181.0,60.3 184.0,57.0C187.0,53.7 191.5,50.0 196.0,48.0C200.5,46.0 205.5,45.0 211.0,45.0Z" fill="none" stroke="#a06a4a" stroke-width="10" filter="url(#bl4)" opacity="0.85"/>
 <path d="M211.0,45.0C216.5,45.0 224.0,45.8 229.0,48.0C234.0,50.2 237.8,53.7 241.0,58.0C244.2,62.3 246.5,68.3 248.0,74.0C249.5,79.7 249.2,87.7 250.0,92.0C250.8,96.3 252.0,98.3 253.0,100.0C254.0,101.7 255.7,99.8 256.0,102.0C256.3,104.2 255.8,109.5 255.0,113.0C254.2,116.5 252.5,120.7 251.0,123.0C249.5,125.3 247.5,124.2 246.0,127.0C244.5,129.8 243.0,134.5 242.0,140.0C241.0,145.5 240.0,154.2 240.0,160.0C240.0,165.8 240.0,171.5 242.0,175.0C244.0,178.5 247.7,179.2 252.0,181.0C256.3,182.8 262.5,184.0 268.0,186.0C273.5,188.0 278.7,190.7 285.0,193.0C291.3,195.3 300.3,197.3 306.0,200.0C311.7,202.7 315.5,205.3 319.0,209.0C322.5,212.7 325.2,216.6 327.0,222.0C328.8,227.4 329.0,233.3 330.0,241.5C331.0,249.7 332.0,261.2 333.0,271.0C334.0,280.8 334.8,291.8 336.0,300.0C337.2,308.2 338.7,313.5 340.0,320.0C341.3,326.5 341.5,328.8 344.0,339.0C346.5,349.2 352.7,365.3 355.0,381.0C357.3,396.7 357.8,419.8 358.0,433.0C358.2,446.2 356.2,451.7 356.0,460.0C355.8,468.3 356.0,476.0 357.0,483.0C358.0,490.0 360.9,495.8 362.0,502.0C363.1,508.2 363.8,514.7 363.5,520.0C363.2,525.3 361.9,529.2 360.0,534.0C358.1,538.8 355.2,545.8 352.0,549.0C348.8,552.2 344.0,553.3 341.0,553.0C338.0,552.7 335.2,549.5 334.0,547.0C332.8,544.5 332.8,540.5 334.0,538.0C335.2,535.5 339.5,535.0 341.0,532.0C342.5,529.0 343.5,524.0 343.0,520.0C342.5,516.0 339.3,509.7 338.0,508.0C336.7,506.3 336.2,508.0 335.0,510.0C333.8,512.0 332.7,517.5 331.0,520.0C329.3,522.5 326.4,525.0 325.0,525.0C323.6,525.0 322.3,523.8 322.5,520.0C322.7,516.2 324.6,507.7 326.0,502.0C327.4,496.3 330.0,493.0 331.0,486.0C332.0,479.0 333.2,469.7 332.0,460.0C330.8,450.3 326.3,440.8 324.0,428.0C321.7,415.2 320.3,397.8 318.0,383.0C315.7,368.2 313.5,352.2 310.0,339.0C306.5,325.8 301.8,304.0 297.0,304.0C292.2,304.0 284.2,325.8 281.0,339.0C277.8,352.2 277.5,368.2 278.0,383.0C278.5,397.8 281.8,410.2 284.0,428.0C286.2,445.8 289.3,471.8 291.0,490.0C292.7,508.2 294.0,518.2 294.0,537.0C294.0,555.8 292.8,582.7 291.0,603.0C289.2,623.3 284.8,642.8 283.0,659.0C281.2,675.2 280.0,687.2 280.0,700.0C280.0,712.8 282.5,724.0 283.0,736.0C283.5,748.0 284.5,758.0 283.0,772.0C281.5,786.0 277.2,803.8 274.0,820.0C270.8,836.2 265.3,853.7 264.0,869.0C262.7,884.3 263.3,901.7 266.0,912.0C268.7,922.3 278.2,926.3 280.0,931.0C281.8,935.7 281.0,938.3 277.0,940.0C273.0,941.7 263.0,941.0 256.0,941.0C249.0,941.0 239.2,947.3 235.0,940.0C230.8,932.7 231.0,908.8 231.0,897.0C231.0,885.2 234.7,881.8 235.0,869.0C235.3,856.2 233.8,836.2 233.0,820.0C232.2,803.8 229.7,786.0 230.0,772.0C230.3,758.0 234.2,748.0 235.0,736.0C235.8,724.0 236.0,714.7 235.0,700.0C234.0,685.3 231.8,667.8 229.0,648.0C226.2,628.2 220.2,599.8 218.0,581.0C215.8,562.2 217.3,543.2 216.0,535.0C214.7,526.8 212.0,532.0 210.0,532.0C208.0,532.0 205.3,526.8 204.0,535.0C202.7,543.2 204.2,562.2 202.0,581.0C199.8,599.8 193.8,628.2 191.0,648.0C188.2,667.8 186.0,685.3 185.0,700.0C184.0,714.7 184.3,725.5 185.0,736.0C185.7,746.5 189.0,749.0 189.0,763.0C189.0,777.0 186.2,802.3 185.0,820.0C183.8,837.7 181.7,856.8 182.0,869.0C182.3,881.2 187.0,881.2 187.0,893.0C187.0,904.8 186.5,932.0 182.0,940.0C177.5,948.0 166.8,941.0 160.0,941.0C153.2,941.0 144.3,942.0 141.0,940.0C137.7,938.0 138.0,933.7 140.0,929.0C142.0,924.3 150.3,922.0 153.0,912.0C155.7,902.0 157.2,884.3 156.0,869.0C154.8,853.7 149.3,836.2 146.0,820.0C142.7,803.8 137.7,786.0 136.0,772.0C134.3,758.0 135.3,748.0 136.0,736.0C136.7,724.0 139.7,712.8 140.0,700.0C140.3,687.2 139.8,675.2 138.0,659.0C136.2,642.8 131.0,623.3 129.0,603.0C127.0,582.7 126.0,555.8 126.0,537.0C126.0,518.2 127.8,504.5 129.0,490.0C130.2,475.5 131.0,464.0 133.0,450.0C135.0,436.0 139.2,417.2 141.0,406.0C142.8,394.8 144.0,394.2 144.0,383.0C144.0,371.8 143.8,352.3 141.0,339.0C138.2,325.7 132.0,303.0 127.0,303.0C122.0,303.0 115.2,325.7 111.0,339.0C106.8,352.3 104.3,368.2 102.0,383.0C99.7,397.8 99.3,415.2 97.0,428.0C94.7,440.8 90.0,450.8 88.0,460.0C86.0,469.2 84.9,476.8 85.0,483.0C85.1,489.2 87.6,491.6 88.7,497.0C89.8,502.4 91.2,511.0 91.5,515.6C91.8,520.2 91.5,523.2 90.6,524.8C89.7,526.4 87.4,527.1 86.0,525.0C84.6,522.9 83.7,514.7 82.3,512.0C80.9,509.3 79.1,507.7 77.6,509.0C76.1,510.3 73.9,516.2 73.5,520.0C73.1,523.8 73.5,528.7 75.0,532.0C76.5,535.3 81.1,537.1 82.3,539.6C83.5,542.1 83.4,544.8 82.3,547.0C81.2,549.2 78.7,552.1 75.8,552.6C72.9,553.1 68.0,552.9 64.7,549.8C61.5,546.7 58.1,540.5 56.3,534.0C54.4,527.5 53.3,517.9 53.6,511.0C53.9,504.1 56.8,497.8 58.2,492.4C59.6,487.0 61.1,483.9 61.9,478.5C62.7,473.1 63.1,468.4 63.0,460.0C62.9,451.6 61.2,440.8 61.0,428.0C60.8,415.2 60.2,397.8 62.0,383.0C63.8,368.2 68.8,349.5 72.0,339.0C75.2,328.5 79.0,327.7 81.0,320.0C83.0,312.3 82.8,302.3 84.0,293.0C85.2,283.7 87.2,273.8 88.3,264.0C89.4,254.2 89.6,241.5 90.6,234.0C91.5,226.5 92.1,223.5 94.0,219.0C95.9,214.5 98.5,210.4 102.0,207.0C105.5,203.6 109.2,201.0 115.0,198.5C120.8,196.0 130.5,193.8 137.0,192.0C143.5,190.2 148.5,189.5 154.0,188.0C159.5,186.5 165.7,185.0 170.0,183.0C174.3,181.0 178.2,179.8 180.0,176.0C181.8,172.2 181.3,166.0 181.0,160.0C180.7,154.0 179.0,145.5 178.0,140.0C177.0,134.5 176.3,129.8 175.0,127.0C173.7,124.2 171.5,125.3 170.0,123.0C168.5,120.7 166.7,116.5 166.0,113.0C165.3,109.5 165.0,104.2 166.0,102.0C167.0,99.8 170.8,102.8 172.0,100.0C173.2,97.2 172.0,90.3 173.0,85.0C174.0,79.7 176.2,72.7 178.0,68.0C179.8,63.3 181.0,60.3 184.0,57.0C187.0,53.7 191.5,50.0 196.0,48.0C200.5,46.0 205.5,45.0 211.0,45.0Z" fill="none" stroke="#9a6446" stroke-width="14" filter="url(#bl4)" opacity="0.6" transform="translate(-7,0)"/>
</g></g>
<path d="M173.0,98.3C172.3,95.7 171.9,88.2 172.3,82.8C172.7,77.4 173.6,70.8 175.6,66.0C177.6,61.2 181.1,57.3 184.6,54.3C188.1,51.3 191.8,49.3 196.3,47.8C200.9,46.3 206.7,45.4 211.9,45.4C217.1,45.4 222.9,46.1 227.4,47.8C231.9,49.5 235.8,52.1 239.0,55.6C242.2,59.1 245.0,63.8 246.9,68.5C248.8,73.2 250.2,79.0 250.7,84.0C251.2,89.0 250.9,95.9 250.1,98.3C249.2,100.7 246.8,101.8 245.6,98.3C244.4,94.8 244.7,83.0 243.0,77.6C241.3,72.2 239.8,68.4 235.2,66.0C230.6,63.6 222.2,63.5 215.7,63.3C209.2,63.1 202.1,63.5 196.3,64.6C190.5,65.7 183.9,66.8 180.7,69.8C177.5,72.8 177.7,78.0 176.9,82.8C176.2,87.5 176.8,95.7 176.2,98.3C175.5,100.9 173.7,100.9 173.0,98.3Z" fill="#3f2a1c"/><path d="M190.0,52.0C196.3,50.3 222.0,50.3 230.0,52.0C238.0,53.7 240.5,60.7 238.0,62.0C235.5,63.3 222.7,60.0 215.0,60.0C207.3,60.0 196.2,63.3 192.0,62.0C187.8,60.7 183.7,53.7 190.0,52.0Z" fill="#6a4a34" filter="url(#bl2)" opacity="0.5"/>
<g filter="url(#lit)"><g clip-path="url(#cb)">
 <rect x="390" y="40" width="330" height="910" fill="#c28b6e"/>
 <path d="M548.0,210.0C548.0,225.0 547.8,268.3 548.0,300.0C548.2,331.7 548.8,383.3 549.0,400.0" fill="none" stroke="#7e5640" stroke-width="7" stroke-linecap="round" filter="url(#bl3)" opacity="0.35"/><path d="M532.0,250.0C531.7,263.3 529.5,306.7 530.0,330.0C530.5,353.3 534.2,380.0 535.0,390.0" fill="none" stroke="#dca684" stroke-width="8" stroke-linecap="round" filter="url(#bl4)" opacity="0.35"/><path d="M566.0,250.0C566.3,263.3 568.5,306.7 568.0,330.0C567.5,353.3 563.8,380.0 563.0,390.0" fill="none" stroke="#dca684" stroke-width="8" stroke-linecap="round" filter="url(#bl4)" opacity="0.45"/><path d="M468.0,236.0C471.3,226.3 483.3,227.7 490.0,232.0C496.7,236.3 505.5,252.7 508.0,262.0C510.5,271.3 511.3,283.3 505.0,288.0C498.7,292.7 476.2,298.7 470.0,290.0C463.8,281.3 464.7,245.7 468.0,236.0Z" fill="#8a5e44" filter="url(#bl5)" opacity="0.3"/><path d="M487.0,226.0C490.0,230.0 499.5,240.2 505.0,250.0C510.5,259.8 517.5,279.2 520.0,285.0" fill="none" stroke="#dca684" stroke-width="4" stroke-linecap="round" filter="url(#bl2)" opacity="0.45"/><path d="M590.0,238.0C596.8,231.7 619.7,223.3 626.0,232.0C632.3,240.7 632.3,279.3 628.0,290.0C623.7,300.7 607.2,299.3 600.0,296.0C592.8,292.7 586.7,279.7 585.0,270.0C583.3,260.3 583.2,244.3 590.0,238.0Z" fill="#dca684" filter="url(#bl5)" opacity="0.4"/><path d="M613.0,224.0C610.0,228.3 601.8,240.7 595.0,250.0C588.2,259.3 575.8,275.0 572.0,280.0" fill="none" stroke="#8a5e44" stroke-width="4" stroke-linecap="round" filter="url(#bl2)" opacity="0.35"/><path d="M468.0,236.0C467.8,243.3 467.2,268.3 467.0,280.0C466.8,291.7 467.0,301.7 467.0,306.0" fill="none" stroke="#6e4a34" stroke-width="3" stroke-linecap="round" filter="url(#bl1)" opacity="0.45"/><path d="M626.0,236.0C626.3,243.3 627.5,268.3 628.0,280.0C628.5,291.7 628.8,301.7 629.0,306.0" fill="none" stroke="#6e4a34" stroke-width="3" stroke-linecap="round" filter="url(#bl1)" opacity="0.35"/><path d="M430.0,225.0C436.2,214.3 457.0,223.5 462.0,236.0C467.0,248.5 464.0,284.3 460.0,300.0C456.0,315.7 443.8,330.0 438.0,330.0C432.2,330.0 426.3,317.5 425.0,300.0C423.7,282.5 423.8,235.7 430.0,225.0Z" fill="#dca684" filter="url(#bl6)" opacity="0.35"/><path d="M634.0,240.0C637.7,227.5 656.0,215.0 662.0,225.0C668.0,235.0 670.3,282.5 670.0,300.0C669.7,317.5 665.0,330.0 660.0,330.0C655.0,330.0 644.3,315.0 640.0,300.0C635.7,285.0 630.3,252.5 634.0,240.0Z" fill="#7e5640" filter="url(#bl6)" opacity="0.3"/><path d="M522.0,144.0C526.3,144.3 539.2,146.0 548.0,146.0C556.8,146.0 570.5,144.3 575.0,144.0" fill="none" stroke="#dca684" stroke-width="4" stroke-linecap="round" filter="url(#bl2)" opacity="0.5"/><path d="M468.0,295.0C473.0,278.3 493.8,285.8 500.0,300.0C506.2,314.2 507.5,360.0 505.0,380.0C502.5,400.0 490.8,416.7 485.0,420.0C479.2,423.3 472.8,420.8 470.0,400.0C467.2,379.2 463.0,311.7 468.0,295.0Z" fill="#7a5240" filter="url(#bl6)" opacity="0.45"/><path d="M585.0,295.0C592.2,283.3 621.8,284.2 628.0,300.0C634.2,315.8 626.7,373.3 622.0,390.0C617.3,406.7 606.2,403.3 600.0,400.0C593.8,396.7 587.5,387.5 585.0,370.0C582.5,352.5 577.8,306.7 585.0,295.0Z" fill="#e0a886" filter="url(#bl6)" opacity="0.6"/><path d="M415.0,330.0C413.3,341.7 405.8,378.3 405.0,400.0C404.2,421.7 409.2,450.0 410.0,460.0" fill="none" stroke="#dca684" stroke-width="14" stroke-linecap="round" filter="url(#bl6)" opacity="0.45"/><path d="M665.0,330.0C668.3,341.7 680.8,378.3 685.0,400.0C689.2,421.7 689.2,450.0 690.0,460.0" fill="none" stroke="#7a5240" stroke-width="12" stroke-linecap="round" filter="url(#bl6)" opacity="0.35"/><path d="M485.0,380.0C507.8,371.7 592.2,371.7 615.0,380.0C637.8,388.3 644.8,421.7 622.0,430.0C599.2,438.3 500.8,438.3 478.0,430.0C455.2,421.7 462.2,388.3 485.0,380.0Z" fill="#9a6a4c" filter="url(#bl6)" opacity="0.2"/><ellipse cx="520" cy="513" rx="24" ry="16" fill="#f2b690" filter="url(#bl6)" opacity="0.55"/><ellipse cx="598" cy="513" rx="24" ry="16" fill="#f2b690" filter="url(#bl6)" opacity="0.5"/><path d="M484.0,495.0C487.0,490.3 496.5,487.8 500.0,492.0C503.5,496.2 506.3,513.7 505.0,520.0C503.7,526.3 495.8,530.0 492.0,530.0C488.2,530.0 483.3,525.8 482.0,520.0C480.7,514.2 481.0,499.7 484.0,495.0Z" fill="#6e4a34" filter="url(#bl5)" opacity="0.35"/><path d="M556.0,500.0C558.8,496.7 568.5,501.3 575.0,505.0C581.5,508.7 594.2,517.5 595.0,522.0C595.8,526.5 586.2,531.5 580.0,532.0C573.8,532.5 562.0,530.3 558.0,525.0C554.0,519.7 553.2,503.3 556.0,500.0Z" fill="#6e4a34" filter="url(#bl5)" opacity="0.4"/><path d="M548.0,438.0C548.3,445.0 549.3,468.8 550.0,480.0C550.7,491.2 548.7,497.2 552.0,505.0C555.3,512.8 567.0,523.3 570.0,527.0" fill="none" stroke="#5e3c2a" stroke-width="3" stroke-linecap="round" filter="url(#bl2)" opacity="0.6"/><path d="M484.0,560.0C484.2,575.0 483.7,625.0 485.0,650.0C486.3,675.0 490.8,700.0 492.0,710.0" fill="none" stroke="#7e5640" stroke-width="10" stroke-linecap="round" filter="url(#bl5)" opacity="0.3"/><path d="M524.0,545.0C523.7,562.5 523.3,620.8 522.0,650.0C520.7,679.2 517.0,708.3 516.0,720.0" fill="none" stroke="#e6ae8c" stroke-width="20" stroke-linecap="round" filter="url(#bl6)" opacity="0.8"/><path d="M572.0,560.0C572.3,575.0 573.3,625.0 574.0,650.0C574.7,675.0 575.7,700.0 576.0,710.0" fill="none" stroke="#7e5640" stroke-width="10" stroke-linecap="round" filter="url(#bl5)" opacity="0.25"/><path d="M612.0,545.0C612.0,562.5 613.0,620.8 612.0,650.0C611.0,679.2 607.0,708.3 606.0,720.0" fill="none" stroke="#e6ae8c" stroke-width="20" stroke-linecap="round" filter="url(#bl6)" opacity="0.85"/><ellipse cx="504" cy="676" rx="6" ry="10" fill="#6e4a34" filter="url(#bl4)" opacity="0.35"/><ellipse cx="597" cy="688" rx="6" ry="10" fill="#6e4a34" filter="url(#bl4)" opacity="0.3"/><path d="M497.0,740.0C497.8,750.0 500.5,780.0 502.0,800.0C503.5,820.0 505.3,850.0 506.0,860.0" fill="none" stroke="#e2aa88" stroke-width="18" stroke-linecap="round" filter="url(#bl6)" opacity="0.5"/><path d="M600.0,750.0C600.3,758.3 602.3,781.7 602.0,800.0C601.7,818.3 598.7,850.0 598.0,860.0" fill="none" stroke="#e6ae8c" stroke-width="18" stroke-linecap="round" filter="url(#bl6)" opacity="0.65"/><path d="M492.0,740.0C493.0,753.3 495.7,798.3 498.0,820.0C500.3,841.7 504.7,861.7 506.0,870.0" fill="none" stroke="#7e5640" stroke-width="8" stroke-linecap="round" filter="url(#bl4)" opacity="0.3"/><path d="M590.0,740.0C590.8,750.0 593.3,783.3 595.0,800.0C596.7,816.7 599.2,833.3 600.0,840.0" fill="none" stroke="#dca684" stroke-width="8" stroke-linecap="round" filter="url(#bl4)" opacity="0.35"/><path d="M440.0,230.0C438.3,241.7 434.2,275.0 430.0,300.0C425.8,325.0 417.5,366.7 415.0,380.0" fill="none" stroke="#dca684" stroke-width="6" stroke-linecap="round" filter="url(#bl4)" opacity="0.35"/><path d="M655.0,230.0C657.8,241.7 666.2,271.7 672.0,300.0C677.8,328.3 687.0,383.3 690.0,400.0" fill="none" stroke="#7e5640" stroke-width="6" stroke-linecap="round" filter="url(#bl4)" opacity="0.3"/><ellipse cx="410" cy="505" rx="9" ry="20" fill="#e8ae8e" filter="url(#bl5)" opacity="0.5"/><ellipse cx="690" cy="505" rx="9" ry="20" fill="#e8ae8e" filter="url(#bl5)" opacity="0.5"/><path d="M485.0,938.0C487.5,938.5 494.2,941.0 500.0,941.0C505.8,941.0 516.7,938.5 520.0,938.0" fill="none" stroke="#5e3c2a" stroke-width="4" stroke-linecap="round" filter="url(#bl2)" opacity="0.45"/><path d="M578.0,938.0C581.2,938.5 590.7,941.0 597.0,941.0C603.3,941.0 612.8,938.5 616.0,938.0" fill="none" stroke="#5e3c2a" stroke-width="4" stroke-linecap="round" filter="url(#bl2)" opacity="0.45"/><path d="M520.0,140.0C530.0,134.2 568.0,134.2 578.0,140.0C588.0,145.8 590.0,169.2 580.0,175.0C570.0,180.8 528.0,180.8 518.0,175.0C508.0,169.2 510.0,145.8 520.0,140.0Z" fill="#d89c78" filter="url(#bl3)" opacity="0.4"/>
 <path d="M548.0,49.5C554.0,49.5 561.0,50.2 566.0,52.0C571.0,53.8 575.0,56.7 578.0,60.0C581.0,63.3 582.7,67.0 584.0,72.0C585.3,77.0 585.5,84.8 586.0,90.0C586.5,95.2 586.0,100.7 587.0,103.0C588.0,105.3 591.0,101.8 592.0,104.0C593.0,106.2 593.3,112.0 593.0,116.0C592.7,120.0 591.5,125.3 590.0,128.0C588.5,130.7 585.8,130.2 584.0,132.0C582.2,133.8 579.8,135.8 579.0,139.0C578.2,142.2 578.8,146.2 579.0,151.0C579.2,155.8 579.5,163.3 580.0,168.0C580.5,172.7 577.2,175.3 582.0,179.0C586.8,182.7 598.2,186.3 609.0,190.0C619.8,193.7 638.2,196.5 647.0,201.0C655.8,205.5 658.7,210.3 662.0,217.0C665.3,223.7 665.8,232.2 667.0,241.0C668.2,249.8 668.0,261.2 669.0,270.0C670.0,278.8 670.5,282.5 673.0,294.0C675.5,305.5 680.2,324.2 684.0,339.0C687.8,353.8 693.7,368.2 696.0,383.0C698.3,397.8 698.2,413.5 698.0,428.0C697.8,442.5 695.2,460.2 695.0,470.0C694.8,479.8 695.3,480.4 696.7,486.7C698.1,492.9 701.9,501.9 703.3,507.5C704.7,513.0 705.1,515.1 705.0,520.0C704.9,524.9 704.2,531.9 702.5,536.7C700.8,541.5 697.9,546.1 695.0,549.0C692.1,551.9 688.0,553.8 685.0,554.0C682.0,554.2 678.2,552.0 676.7,550.0C675.2,548.0 674.7,544.2 675.8,541.7C676.9,539.2 681.9,538.6 683.3,535.0C684.7,531.4 684.9,524.2 684.2,520.0C683.5,515.8 680.5,511.4 679.2,510.0C678.0,508.6 677.5,509.4 676.7,511.7C675.9,514.0 675.6,521.4 674.2,524.0C672.8,526.6 669.5,528.2 668.3,527.5C667.0,526.8 666.6,523.3 666.7,520.0C666.9,516.7 668.4,512.4 669.2,507.5C670.0,502.6 670.9,497.1 671.7,490.8C672.5,484.6 674.8,480.5 674.0,470.0C673.2,459.5 669.7,442.5 667.0,428.0C664.3,413.5 661.3,396.0 658.0,383.0C654.7,370.0 651.8,362.8 647.0,350.0C642.2,337.2 633.8,306.0 629.0,306.0C624.2,306.0 620.5,337.2 618.0,350.0C615.5,362.8 613.3,370.0 614.0,383.0C614.7,396.0 619.5,410.2 622.0,428.0C624.5,445.8 627.2,471.8 629.0,490.0C630.8,508.2 633.0,518.2 633.0,537.0C633.0,555.8 630.8,580.8 629.0,603.0C627.2,625.2 623.7,653.0 622.0,670.0C620.3,687.0 619.0,692.0 619.0,705.0C619.0,718.0 621.7,736.0 622.0,748.0C622.3,760.0 622.3,765.0 621.0,777.0C619.7,789.0 616.7,802.7 614.0,820.0C611.3,837.3 605.8,864.8 605.0,881.0C604.2,897.2 606.5,908.7 609.0,917.0C611.5,925.3 618.5,927.2 620.0,931.0C621.5,934.8 621.8,938.3 618.0,940.0C614.2,941.7 604.0,941.0 597.0,941.0C590.0,941.0 580.0,947.3 576.0,940.0C572.0,932.7 573.2,906.8 573.0,897.0C572.8,887.2 574.7,893.8 575.0,881.0C575.3,868.2 575.8,839.0 575.0,820.0C574.2,801.0 570.0,781.0 570.0,767.0C570.0,753.0 574.3,747.2 575.0,736.0C575.7,724.8 575.0,711.0 574.0,700.0C573.0,689.0 571.7,686.2 569.0,670.0C566.3,653.8 560.7,625.7 558.0,603.0C555.3,580.3 554.5,546.2 553.0,534.0C551.5,521.8 550.5,530.0 549.0,530.0C547.5,530.0 545.5,521.8 544.0,534.0C542.5,546.2 542.2,580.3 540.0,603.0C537.8,625.7 533.8,653.8 531.0,670.0C528.2,686.2 524.2,689.0 523.0,700.0C521.8,711.0 523.0,724.8 524.0,736.0C525.0,747.2 529.0,753.0 529.0,767.0C529.0,781.0 525.0,801.0 524.0,820.0C523.0,839.0 522.5,868.2 523.0,881.0C523.5,893.8 527.0,887.2 527.0,897.0C527.0,906.8 527.5,932.7 523.0,940.0C518.5,947.3 507.0,941.2 500.0,941.0C493.0,940.8 484.3,941.0 481.0,939.0C477.7,937.0 478.2,933.5 480.0,929.0C481.8,924.5 489.3,922.0 492.0,912.0C494.7,902.0 497.0,884.3 496.0,869.0C495.0,853.7 489.5,836.2 486.0,820.0C482.5,803.8 476.8,786.0 475.0,772.0C473.2,758.0 474.3,748.0 475.0,736.0C475.7,724.0 478.8,711.0 479.0,700.0C479.2,689.0 477.8,686.2 476.0,670.0C474.2,653.8 470.0,625.2 468.0,603.0C466.0,580.8 464.2,555.8 464.0,537.0C463.8,518.2 465.5,508.2 467.0,490.0C468.5,471.8 470.5,445.8 473.0,428.0C475.5,410.2 480.8,396.0 482.0,383.0C483.2,370.0 482.5,362.8 480.0,350.0C477.5,337.2 472.2,306.0 467.0,306.0C461.8,306.0 453.3,337.2 449.0,350.0C444.7,362.8 443.2,370.0 441.0,383.0C438.8,396.0 438.7,413.5 436.0,428.0C433.3,442.5 426.4,460.5 424.6,470.0C422.8,479.5 424.1,480.8 425.0,485.0C425.9,489.2 428.5,490.6 430.0,495.0C431.5,499.4 433.2,506.9 434.2,511.7C435.2,516.5 436.4,521.4 435.8,524.0C435.2,526.6 432.6,528.2 430.8,527.5C429.0,526.8 426.4,522.9 425.0,520.0C423.6,517.1 423.5,511.4 422.5,510.0C421.5,508.6 420.2,509.4 419.0,511.7C417.8,514.0 414.8,519.8 415.0,524.0C415.2,528.2 418.2,533.6 420.0,536.7C421.8,539.8 425.0,540.3 425.8,542.5C426.6,544.7 426.0,548.1 425.0,550.0C424.0,551.9 422.8,553.5 420.0,554.0C417.2,554.5 411.6,555.5 408.3,553.3C405.0,551.1 401.9,546.3 400.0,540.8C398.1,535.2 396.8,527.0 396.7,520.0C396.6,513.0 398.1,505.2 399.2,499.0C400.3,492.8 402.5,487.3 403.3,482.5C404.1,477.7 404.4,479.1 404.2,470.0C404.0,460.9 402.7,442.5 402.0,428.0C401.3,413.5 398.8,397.8 400.0,383.0C401.2,368.2 405.7,353.8 409.0,339.0C412.3,324.2 416.8,308.8 420.0,294.0C423.2,279.2 425.8,262.5 428.0,250.0C430.2,237.5 429.8,227.2 433.0,219.0C436.2,210.8 438.0,205.8 447.0,201.0C456.0,196.2 476.0,193.7 487.0,190.0C498.0,186.3 507.8,182.7 513.0,179.0C518.2,175.3 517.0,172.7 518.0,168.0C519.0,163.3 519.0,155.8 519.0,151.0C519.0,146.2 519.2,142.2 518.0,139.0C516.8,135.8 514.2,133.8 512.0,132.0C509.8,130.2 506.5,130.7 505.0,128.0C503.5,125.3 503.2,120.0 503.0,116.0C502.8,112.0 503.0,106.2 504.0,104.0C505.0,101.8 508.1,105.3 509.0,103.0C509.9,100.7 509.2,95.2 509.5,90.0C509.8,84.8 509.8,77.0 511.0,72.0C512.2,67.0 513.8,63.3 517.0,60.0C520.2,56.7 524.8,53.8 530.0,52.0C535.2,50.2 542.0,49.5 548.0,49.5Z" fill="none" stroke="#8e6246" stroke-width="10" filter="url(#bl4)" opacity="0.85"/>
 <path d="M548.0,49.5C554.0,49.5 561.0,50.2 566.0,52.0C571.0,53.8 575.0,56.7 578.0,60.0C581.0,63.3 582.7,67.0 584.0,72.0C585.3,77.0 585.5,84.8 586.0,90.0C586.5,95.2 586.0,100.7 587.0,103.0C588.0,105.3 591.0,101.8 592.0,104.0C593.0,106.2 593.3,112.0 593.0,116.0C592.7,120.0 591.5,125.3 590.0,128.0C588.5,130.7 585.8,130.2 584.0,132.0C582.2,133.8 579.8,135.8 579.0,139.0C578.2,142.2 578.8,146.2 579.0,151.0C579.2,155.8 579.5,163.3 580.0,168.0C580.5,172.7 577.2,175.3 582.0,179.0C586.8,182.7 598.2,186.3 609.0,190.0C619.8,193.7 638.2,196.5 647.0,201.0C655.8,205.5 658.7,210.3 662.0,217.0C665.3,223.7 665.8,232.2 667.0,241.0C668.2,249.8 668.0,261.2 669.0,270.0C670.0,278.8 670.5,282.5 673.0,294.0C675.5,305.5 680.2,324.2 684.0,339.0C687.8,353.8 693.7,368.2 696.0,383.0C698.3,397.8 698.2,413.5 698.0,428.0C697.8,442.5 695.2,460.2 695.0,470.0C694.8,479.8 695.3,480.4 696.7,486.7C698.1,492.9 701.9,501.9 703.3,507.5C704.7,513.0 705.1,515.1 705.0,520.0C704.9,524.9 704.2,531.9 702.5,536.7C700.8,541.5 697.9,546.1 695.0,549.0C692.1,551.9 688.0,553.8 685.0,554.0C682.0,554.2 678.2,552.0 676.7,550.0C675.2,548.0 674.7,544.2 675.8,541.7C676.9,539.2 681.9,538.6 683.3,535.0C684.7,531.4 684.9,524.2 684.2,520.0C683.5,515.8 680.5,511.4 679.2,510.0C678.0,508.6 677.5,509.4 676.7,511.7C675.9,514.0 675.6,521.4 674.2,524.0C672.8,526.6 669.5,528.2 668.3,527.5C667.0,526.8 666.6,523.3 666.7,520.0C666.9,516.7 668.4,512.4 669.2,507.5C670.0,502.6 670.9,497.1 671.7,490.8C672.5,484.6 674.8,480.5 674.0,470.0C673.2,459.5 669.7,442.5 667.0,428.0C664.3,413.5 661.3,396.0 658.0,383.0C654.7,370.0 651.8,362.8 647.0,350.0C642.2,337.2 633.8,306.0 629.0,306.0C624.2,306.0 620.5,337.2 618.0,350.0C615.5,362.8 613.3,370.0 614.0,383.0C614.7,396.0 619.5,410.2 622.0,428.0C624.5,445.8 627.2,471.8 629.0,490.0C630.8,508.2 633.0,518.2 633.0,537.0C633.0,555.8 630.8,580.8 629.0,603.0C627.2,625.2 623.7,653.0 622.0,670.0C620.3,687.0 619.0,692.0 619.0,705.0C619.0,718.0 621.7,736.0 622.0,748.0C622.3,760.0 622.3,765.0 621.0,777.0C619.7,789.0 616.7,802.7 614.0,820.0C611.3,837.3 605.8,864.8 605.0,881.0C604.2,897.2 606.5,908.7 609.0,917.0C611.5,925.3 618.5,927.2 620.0,931.0C621.5,934.8 621.8,938.3 618.0,940.0C614.2,941.7 604.0,941.0 597.0,941.0C590.0,941.0 580.0,947.3 576.0,940.0C572.0,932.7 573.2,906.8 573.0,897.0C572.8,887.2 574.7,893.8 575.0,881.0C575.3,868.2 575.8,839.0 575.0,820.0C574.2,801.0 570.0,781.0 570.0,767.0C570.0,753.0 574.3,747.2 575.0,736.0C575.7,724.8 575.0,711.0 574.0,700.0C573.0,689.0 571.7,686.2 569.0,670.0C566.3,653.8 560.7,625.7 558.0,603.0C555.3,580.3 554.5,546.2 553.0,534.0C551.5,521.8 550.5,530.0 549.0,530.0C547.5,530.0 545.5,521.8 544.0,534.0C542.5,546.2 542.2,580.3 540.0,603.0C537.8,625.7 533.8,653.8 531.0,670.0C528.2,686.2 524.2,689.0 523.0,700.0C521.8,711.0 523.0,724.8 524.0,736.0C525.0,747.2 529.0,753.0 529.0,767.0C529.0,781.0 525.0,801.0 524.0,820.0C523.0,839.0 522.5,868.2 523.0,881.0C523.5,893.8 527.0,887.2 527.0,897.0C527.0,906.8 527.5,932.7 523.0,940.0C518.5,947.3 507.0,941.2 500.0,941.0C493.0,940.8 484.3,941.0 481.0,939.0C477.7,937.0 478.2,933.5 480.0,929.0C481.8,924.5 489.3,922.0 492.0,912.0C494.7,902.0 497.0,884.3 496.0,869.0C495.0,853.7 489.5,836.2 486.0,820.0C482.5,803.8 476.8,786.0 475.0,772.0C473.2,758.0 474.3,748.0 475.0,736.0C475.7,724.0 478.8,711.0 479.0,700.0C479.2,689.0 477.8,686.2 476.0,670.0C474.2,653.8 470.0,625.2 468.0,603.0C466.0,580.8 464.2,555.8 464.0,537.0C463.8,518.2 465.5,508.2 467.0,490.0C468.5,471.8 470.5,445.8 473.0,428.0C475.5,410.2 480.8,396.0 482.0,383.0C483.2,370.0 482.5,362.8 480.0,350.0C477.5,337.2 472.2,306.0 467.0,306.0C461.8,306.0 453.3,337.2 449.0,350.0C444.7,362.8 443.2,370.0 441.0,383.0C438.8,396.0 438.7,413.5 436.0,428.0C433.3,442.5 426.4,460.5 424.6,470.0C422.8,479.5 424.1,480.8 425.0,485.0C425.9,489.2 428.5,490.6 430.0,495.0C431.5,499.4 433.2,506.9 434.2,511.7C435.2,516.5 436.4,521.4 435.8,524.0C435.2,526.6 432.6,528.2 430.8,527.5C429.0,526.8 426.4,522.9 425.0,520.0C423.6,517.1 423.5,511.4 422.5,510.0C421.5,508.6 420.2,509.4 419.0,511.7C417.8,514.0 414.8,519.8 415.0,524.0C415.2,528.2 418.2,533.6 420.0,536.7C421.8,539.8 425.0,540.3 425.8,542.5C426.6,544.7 426.0,548.1 425.0,550.0C424.0,551.9 422.8,553.5 420.0,554.0C417.2,554.5 411.6,555.5 408.3,553.3C405.0,551.1 401.9,546.3 400.0,540.8C398.1,535.2 396.8,527.0 396.7,520.0C396.6,513.0 398.1,505.2 399.2,499.0C400.3,492.8 402.5,487.3 403.3,482.5C404.1,477.7 404.4,479.1 404.2,470.0C404.0,460.9 402.7,442.5 402.0,428.0C401.3,413.5 398.8,397.8 400.0,383.0C401.2,368.2 405.7,353.8 409.0,339.0C412.3,324.2 416.8,308.8 420.0,294.0C423.2,279.2 425.8,262.5 428.0,250.0C430.2,237.5 429.8,227.2 433.0,219.0C436.2,210.8 438.0,205.8 447.0,201.0C456.0,196.2 476.0,193.7 487.0,190.0C498.0,186.3 507.8,182.7 513.0,179.0C518.2,175.3 517.0,172.7 518.0,168.0C519.0,163.3 519.0,155.8 519.0,151.0C519.0,146.2 519.2,142.2 518.0,139.0C516.8,135.8 514.2,133.8 512.0,132.0C509.8,130.2 506.5,130.7 505.0,128.0C503.5,125.3 503.2,120.0 503.0,116.0C502.8,112.0 503.0,106.2 504.0,104.0C505.0,101.8 508.1,105.3 509.0,103.0C509.9,100.7 509.2,95.2 509.5,90.0C509.8,84.8 509.8,77.0 511.0,72.0C512.2,67.0 513.8,63.3 517.0,60.0C520.2,56.7 524.8,53.8 530.0,52.0C535.2,50.2 542.0,49.5 548.0,49.5Z" fill="none" stroke="#8a5e42" stroke-width="14" filter="url(#bl4)" opacity="0.6" transform="translate(-7,0)"/>
 <path d="M548.0,49.5C554.0,49.5 561.0,50.2 566.0,52.0C571.0,53.8 575.0,56.7 578.0,60.0C581.0,63.3 582.7,67.0 584.0,72.0C585.3,77.0 585.8,83.7 586.0,90.0C586.2,96.3 586.2,103.7 585.5,110.0C584.8,116.3 583.1,123.2 582.0,128.0C580.9,132.8 584.7,137.0 579.0,139.0C573.3,141.0 558.2,140.0 548.0,140.0C537.8,140.0 524.0,141.0 518.0,139.0C512.0,137.0 513.4,132.8 512.0,128.0C510.6,123.2 509.9,116.3 509.5,110.0C509.1,103.7 509.2,96.3 509.5,90.0C509.8,83.7 509.8,77.0 511.0,72.0C512.2,67.0 513.8,63.3 517.0,60.0C520.2,56.7 524.8,53.8 530.0,52.0C535.2,50.2 542.0,49.5 548.0,49.5Z" fill="#3b291d"/><path d="M555.0,80.0C561.0,74.2 580.8,76.7 586.0,85.0C591.2,93.3 589.5,120.8 586.0,130.0C582.5,139.2 571.0,141.7 565.0,140.0C559.0,138.3 551.7,130.0 550.0,120.0C548.3,110.0 549.0,85.8 555.0,80.0Z" fill="#54392a" filter="url(#bl6)" opacity="0.45"/><ellipse cx="507" cy="116" rx="3" ry="11" fill="#e0aa8a" filter="url(#bl2)" opacity="0.6"/><ellipse cx="589" cy="116" rx="3" ry="11" fill="#c89070" filter="url(#bl2)" opacity="0.5"/>
</g></g>
<rect x="212" y="71" width="2" height="1" fill="#000"/><rect x="211" y="72" width="1" height="1" fill="#000"/><rect x="212" y="72" width="2" height="1" fill="#f00"/><rect x="214" y="72" width="1" height="1" fill="#000"/><rect x="210" y="73" width="1" height="1" fill="#000"/><rect x="211" y="73" width="4" height="1" fill="#f00"/><rect x="215" y="73" width="1" height="1" fill="#000"/><rect x="210" y="74" width="1" height="1" fill="#000"/><rect x="211" y="74" width="4" height="1" fill="#f00"/><rect x="215" y="74" width="1" height="1" fill="#000"/><rect x="211" y="75" width="1" height="1" fill="#000"/><rect x="212" y="75" width="2" height="1" fill="#f00"/><rect x="214" y="75" width="1" height="1" fill="#000"/><rect x="212" y="76" width="2" height="1" fill="#000"/><rect x="195" y="98" width="2" height="1" fill="#000"/><rect x="194" y="99" width="1" height="1" fill="#000"/><rect x="195" y="99" width="2" height="1" fill="#f00"/><rect x="197" y="99" width="1" height="1" fill="#000"/><rect x="193" y="100" width="1" height="1" fill="#000"/><rect x="194" y="100" width="4" height="1" fill="#f00"/><rect x="198" y="100" width="1" height="1" fill="#000"/><rect x="193" y="101" width="1" height="1" fill="#000"/><rect x="194" y="101" width="4" height="1" fill="#f00"/><rect x="198" y="101" width="1" height="1" fill="#000"/><rect x="194" y="102" width="1" height="1" fill="#000"/><rect x="195" y="102" width="2" height="1" fill="#f00"/><rect x="197" y="102" width="1" height="1" fill="#000"/><rect x="195" y="103" width="2" height="1" fill="#000"/><rect x="225" y="101" width="2" height="1" fill="#000"/><rect x="224" y="102" width="1" height="1" fill="#000"/><rect x="225" y="102" width="2" height="1" fill="#f00"/><rect x="227" y="102" width="1" height="1" fill="#000"/><rect x="223" y="103" width="1" height="1" fill="#000"/><rect x="224" y="103" width="4" height="1" fill="#f00"/><rect x="228" y="103" width="1" height="1" fill="#000"/><rect x="223" y="104" width="1" height="1" fill="#000"/><rect x="224" y="104" width="4" height="1" fill="#f00"/><rect x="228" y="104" width="1" height="1" fill="#000"/><rect x="224" y="105" width="1" height="1" fill="#000"/><rect x="225" y="105" width="2" height="1" fill="#f00"/><rect x="227" y="105" width="1" height="1" fill="#000"/><rect x="225" y="106" width="2" height="1" fill="#000"/><rect x="168" y="112" width="2" height="1" fill="#000"/><rect x="167" y="113" width="1" height="1" fill="#000"/><rect x="168" y="113" width="2" height="1" fill="#f00"/><rect x="170" y="113" width="1" height="1" fill="#000"/><rect x="166" y="114" width="1" height="1" fill="#000"/><rect x="167" y="114" width="4" height="1" fill="#f00"/><rect x="171" y="114" width="1" height="1" fill="#000"/><rect x="166" y="115" width="1" height="1" fill="#000"/><rect x="167" y="115" width="4" height="1" fill="#f00"/><rect x="171" y="115" width="1" height="1" fill="#000"/><rect x="167" y="116" width="1" height="1" fill="#000"/><rect x="168" y="116" width="2" height="1" fill="#f00"/><rect x="170" y="116" width="1" height="1" fill="#000"/><rect x="168" y="117" width="2" height="1" fill="#000"/><rect x="251" y="114" width="2" height="1" fill="#000"/><rect x="250" y="115" width="1" height="1" fill="#000"/><rect x="251" y="115" width="2" height="1" fill="#f00"/><rect x="253" y="115" width="1" height="1" fill="#000"/><rect x="249" y="116" width="1" height="1" fill="#000"/><rect x="250" y="116" width="4" height="1" fill="#f00"/><rect x="254" y="116" width="1" height="1" fill="#000"/><rect x="249" y="117" width="1" height="1" fill="#000"/><rect x="250" y="117" width="4" height="1" fill="#f00"/><rect x="254" y="117" width="1" height="1" fill="#000"/><rect x="250" y="118" width="1" height="1" fill="#000"/><rect x="251" y="118" width="2" height="1" fill="#f00"/><rect x="253" y="118" width="1" height="1" fill="#000"/><rect x="251" y="119" width="2" height="1" fill="#000"/><rect x="210" y="126" width="2" height="1" fill="#000"/><rect x="209" y="127" width="1" height="1" fill="#000"/><rect x="210" y="127" width="2" height="1" fill="#f00"/><rect x="212" y="127" width="1" height="1" fill="#000"/><rect x="208" y="128" width="1" height="1" fill="#000"/><rect x="209" y="128" width="4" height="1" fill="#f00"/><rect x="213" y="128" width="1" height="1" fill="#000"/><rect x="208" y="129" width="1" height="1" fill="#000"/><rect x="209" y="129" width="4" height="1" fill="#f00"/><rect x="213" y="129" width="1" height="1" fill="#000"/><rect x="209" y="130" width="1" height="1" fill="#000"/><rect x="210" y="130" width="2" height="1" fill="#f00"/><rect x="212" y="130" width="1" height="1" fill="#000"/><rect x="210" y="131" width="2" height="1" fill="#000"/><rect x="209" y="170" width="2" height="1" fill="#000"/><rect x="208" y="171" width="1" height="1" fill="#000"/><rect x="209" y="171" width="2" height="1" fill="#f00"/><rect x="211" y="171" width="1" height="1" fill="#000"/><rect x="207" y="172" width="1" height="1" fill="#000"/><rect x="208" y="172" width="4" height="1" fill="#f00"/><rect x="212" y="172" width="1" height="1" fill="#000"/><rect x="207" y="173" width="1" height="1" fill="#000"/><rect x="208" y="173" width="4" height="1" fill="#f00"/><rect x="212" y="173" width="1" height="1" fill="#000"/><rect x="208" y="174" width="1" height="1" fill="#000"/><rect x="209" y="174" width="2" height="1" fill="#f00"/><rect x="211" y="174" width="1" height="1" fill="#000"/><rect x="209" y="175" width="2" height="1" fill="#000"/><rect x="319" y="212" width="2" height="1" fill="#000"/><rect x="318" y="213" width="1" height="1" fill="#000"/><rect x="319" y="213" width="2" height="1" fill="#f00"/><rect x="321" y="213" width="1" height="1" fill="#000"/><rect x="317" y="214" width="1" height="1" fill="#000"/><rect x="318" y="214" width="4" height="1" fill="#f00"/><rect x="322" y="214" width="1" height="1" fill="#000"/><rect x="317" y="215" width="1" height="1" fill="#000"/><rect x="318" y="215" width="4" height="1" fill="#f00"/><rect x="322" y="215" width="1" height="1" fill="#000"/><rect x="318" y="216" width="1" height="1" fill="#000"/><rect x="319" y="216" width="2" height="1" fill="#f00"/><rect x="321" y="216" width="1" height="1" fill="#000"/><rect x="319" y="217" width="2" height="1" fill="#000"/><rect x="212" y="270" width="2" height="1" fill="#000"/><rect x="211" y="271" width="1" height="1" fill="#000"/><rect x="212" y="271" width="2" height="1" fill="#f00"/><rect x="214" y="271" width="1" height="1" fill="#000"/><rect x="210" y="272" width="1" height="1" fill="#000"/><rect x="211" y="272" width="4" height="1" fill="#f00"/><rect x="215" y="272" width="1" height="1" fill="#000"/><rect x="210" y="273" width="1" height="1" fill="#000"/><rect x="211" y="273" width="4" height="1" fill="#f00"/><rect x="215" y="273" width="1" height="1" fill="#000"/><rect x="211" y="274" width="1" height="1" fill="#000"/><rect x="212" y="274" width="2" height="1" fill="#f00"/><rect x="214" y="274" width="1" height="1" fill="#000"/><rect x="212" y="275" width="2" height="1" fill="#000"/><rect x="162" y="283" width="2" height="1" fill="#000"/><rect x="161" y="284" width="1" height="1" fill="#000"/><rect x="162" y="284" width="2" height="1" fill="#f00"/><rect x="164" y="284" width="1" height="1" fill="#000"/><rect x="160" y="285" width="1" height="1" fill="#000"/><rect x="161" y="285" width="4" height="1" fill="#f00"/><rect x="165" y="285" width="1" height="1" fill="#000"/><rect x="160" y="286" width="1" height="1" fill="#000"/><rect x="161" y="286" width="4" height="1" fill="#f00"/><rect x="165" y="286" width="1" height="1" fill="#000"/><rect x="161" y="287" width="1" height="1" fill="#000"/><rect x="162" y="287" width="2" height="1" fill="#f00"/><rect x="164" y="287" width="1" height="1" fill="#000"/><rect x="162" y="288" width="2" height="1" fill="#000"/><rect x="263" y="284" width="2" height="1" fill="#000"/><rect x="262" y="285" width="1" height="1" fill="#000"/><rect x="263" y="285" width="2" height="1" fill="#f00"/><rect x="265" y="285" width="1" height="1" fill="#000"/><rect x="261" y="286" width="1" height="1" fill="#000"/><rect x="262" y="286" width="4" height="1" fill="#f00"/><rect x="266" y="286" width="1" height="1" fill="#000"/><rect x="261" y="287" width="1" height="1" fill="#000"/><rect x="262" y="287" width="4" height="1" fill="#f00"/><rect x="266" y="287" width="1" height="1" fill="#000"/><rect x="262" y="288" width="1" height="1" fill="#000"/><rect x="263" y="288" width="2" height="1" fill="#f00"/><rect x="265" y="288" width="1" height="1" fill="#000"/><rect x="263" y="289" width="2" height="1" fill="#000"/><rect x="211" y="321" width="2" height="1" fill="#000"/><rect x="210" y="322" width="1" height="1" fill="#000"/><rect x="211" y="322" width="2" height="1" fill="#f00"/><rect x="213" y="322" width="1" height="1" fill="#000"/><rect x="209" y="323" width="1" height="1" fill="#000"/><rect x="210" y="323" width="4" height="1" fill="#f00"/><rect x="214" y="323" width="1" height="1" fill="#000"/><rect x="209" y="324" width="1" height="1" fill="#000"/><rect x="210" y="324" width="4" height="1" fill="#f00"/><rect x="214" y="324" width="1" height="1" fill="#000"/><rect x="210" y="325" width="1" height="1" fill="#000"/><rect x="211" y="325" width="2" height="1" fill="#f00"/><rect x="213" y="325" width="1" height="1" fill="#000"/><rect x="211" y="326" width="2" height="1" fill="#000"/><rect x="84" y="362" width="2" height="1" fill="#000"/><rect x="83" y="363" width="1" height="1" fill="#000"/><rect x="84" y="363" width="2" height="1" fill="#f00"/><rect x="86" y="363" width="1" height="1" fill="#000"/><rect x="82" y="364" width="1" height="1" fill="#000"/><rect x="83" y="364" width="4" height="1" fill="#f00"/><rect x="87" y="364" width="1" height="1" fill="#000"/><rect x="82" y="365" width="1" height="1" fill="#000"/><rect x="83" y="365" width="4" height="1" fill="#f00"/><rect x="87" y="365" width="1" height="1" fill="#000"/><rect x="83" y="366" width="1" height="1" fill="#000"/><rect x="84" y="366" width="2" height="1" fill="#f00"/><rect x="86" y="366" width="1" height="1" fill="#000"/><rect x="84" y="367" width="2" height="1" fill="#000"/><rect x="340" y="370" width="2" height="1" fill="#000"/><rect x="339" y="371" width="1" height="1" fill="#000"/><rect x="340" y="371" width="2" height="1" fill="#f00"/><rect x="342" y="371" width="1" height="1" fill="#000"/><rect x="338" y="372" width="1" height="1" fill="#000"/><rect x="339" y="372" width="4" height="1" fill="#f00"/><rect x="343" y="372" width="1" height="1" fill="#000"/><rect x="338" y="373" width="1" height="1" fill="#000"/><rect x="339" y="373" width="4" height="1" fill="#f00"/><rect x="343" y="373" width="1" height="1" fill="#000"/><rect x="339" y="374" width="1" height="1" fill="#000"/><rect x="340" y="374" width="2" height="1" fill="#f00"/><rect x="342" y="374" width="1" height="1" fill="#000"/><rect x="340" y="375" width="2" height="1" fill="#000"/><rect x="164" y="379" width="2" height="1" fill="#000"/><rect x="163" y="380" width="1" height="1" fill="#000"/><rect x="164" y="380" width="2" height="1" fill="#f00"/><rect x="166" y="380" width="1" height="1" fill="#000"/><rect x="162" y="381" width="1" height="1" fill="#000"/><rect x="163" y="381" width="4" height="1" fill="#f00"/><rect x="167" y="381" width="1" height="1" fill="#000"/><rect x="162" y="382" width="1" height="1" fill="#000"/><rect x="163" y="382" width="4" height="1" fill="#f00"/><rect x="167" y="382" width="1" height="1" fill="#000"/><rect x="163" y="383" width="1" height="1" fill="#000"/><rect x="164" y="383" width="2" height="1" fill="#f00"/><rect x="166" y="383" width="1" height="1" fill="#000"/><rect x="164" y="384" width="2" height="1" fill="#000"/><rect x="266" y="368" width="2" height="1" fill="#000"/><rect x="265" y="369" width="1" height="1" fill="#000"/><rect x="266" y="369" width="2" height="1" fill="#f00"/><rect x="268" y="369" width="1" height="1" fill="#000"/><rect x="264" y="370" width="1" height="1" fill="#000"/><rect x="265" y="370" width="4" height="1" fill="#f00"/><rect x="269" y="370" width="1" height="1" fill="#000"/><rect x="264" y="371" width="1" height="1" fill="#000"/><rect x="265" y="371" width="4" height="1" fill="#f00"/><rect x="269" y="371" width="1" height="1" fill="#000"/><rect x="265" y="372" width="1" height="1" fill="#000"/><rect x="266" y="372" width="2" height="1" fill="#f00"/><rect x="268" y="372" width="1" height="1" fill="#000"/><rect x="266" y="373" width="2" height="1" fill="#000"/><rect x="205" y="397" width="2" height="1" fill="#000"/><rect x="204" y="398" width="1" height="1" fill="#000"/><rect x="205" y="398" width="2" height="1" fill="#f00"/><rect x="207" y="398" width="1" height="1" fill="#000"/><rect x="203" y="399" width="1" height="1" fill="#000"/><rect x="204" y="399" width="4" height="1" fill="#f00"/><rect x="208" y="399" width="1" height="1" fill="#000"/><rect x="203" y="400" width="1" height="1" fill="#000"/><rect x="204" y="400" width="4" height="1" fill="#f00"/><rect x="208" y="400" width="1" height="1" fill="#000"/><rect x="204" y="401" width="1" height="1" fill="#000"/><rect x="205" y="401" width="2" height="1" fill="#f00"/><rect x="207" y="401" width="1" height="1" fill="#000"/><rect x="205" y="402" width="2" height="1" fill="#000"/><rect x="152" y="434" width="2" height="1" fill="#000"/><rect x="151" y="435" width="1" height="1" fill="#000"/><rect x="152" y="435" width="2" height="1" fill="#f00"/><rect x="154" y="435" width="1" height="1" fill="#000"/><rect x="150" y="436" width="1" height="1" fill="#000"/><rect x="151" y="436" width="4" height="1" fill="#f00"/><rect x="155" y="436" width="1" height="1" fill="#000"/><rect x="150" y="437" width="1" height="1" fill="#000"/><rect x="151" y="437" width="4" height="1" fill="#f00"/><rect x="155" y="437" width="1" height="1" fill="#000"/><rect x="151" y="438" width="1" height="1" fill="#000"/><rect x="152" y="438" width="2" height="1" fill="#f00"/><rect x="154" y="438" width="1" height="1" fill="#000"/><rect x="152" y="439" width="2" height="1" fill="#000"/><rect x="266" y="439" width="2" height="1" fill="#000"/><rect x="265" y="440" width="1" height="1" fill="#000"/><rect x="266" y="440" width="2" height="1" fill="#f00"/><rect x="268" y="440" width="1" height="1" fill="#000"/><rect x="264" y="441" width="1" height="1" fill="#000"/><rect x="265" y="441" width="4" height="1" fill="#f00"/><rect x="269" y="441" width="1" height="1" fill="#000"/><rect x="264" y="442" width="1" height="1" fill="#000"/><rect x="265" y="442" width="4" height="1" fill="#f00"/><rect x="269" y="442" width="1" height="1" fill="#000"/><rect x="265" y="443" width="1" height="1" fill="#000"/><rect x="266" y="443" width="2" height="1" fill="#f00"/><rect x="268" y="443" width="1" height="1" fill="#000"/><rect x="266" y="444" width="2" height="1" fill="#000"/><rect x="210" y="496" width="2" height="1" fill="#000"/><rect x="209" y="497" width="1" height="1" fill="#000"/><rect x="210" y="497" width="2" height="1" fill="#f00"/><rect x="212" y="497" width="1" height="1" fill="#000"/><rect x="208" y="498" width="1" height="1" fill="#000"/><rect x="209" y="498" width="4" height="1" fill="#f00"/><rect x="213" y="498" width="1" height="1" fill="#000"/><rect x="208" y="499" width="1" height="1" fill="#000"/><rect x="209" y="499" width="4" height="1" fill="#f00"/><rect x="213" y="499" width="1" height="1" fill="#000"/><rect x="209" y="500" width="1" height="1" fill="#000"/><rect x="210" y="500" width="2" height="1" fill="#f00"/><rect x="212" y="500" width="1" height="1" fill="#000"/><rect x="210" y="501" width="2" height="1" fill="#000"/><rect x="68" y="540" width="2" height="1" fill="#000"/><rect x="67" y="541" width="1" height="1" fill="#000"/><rect x="68" y="541" width="2" height="1" fill="#f00"/><rect x="70" y="541" width="1" height="1" fill="#000"/><rect x="66" y="542" width="1" height="1" fill="#000"/><rect x="67" y="542" width="4" height="1" fill="#f00"/><rect x="71" y="542" width="1" height="1" fill="#000"/><rect x="66" y="543" width="1" height="1" fill="#000"/><rect x="67" y="543" width="4" height="1" fill="#f00"/><rect x="71" y="543" width="1" height="1" fill="#000"/><rect x="67" y="544" width="1" height="1" fill="#000"/><rect x="68" y="544" width="2" height="1" fill="#f00"/><rect x="70" y="544" width="1" height="1" fill="#000"/><rect x="68" y="545" width="2" height="1" fill="#000"/><rect x="345" y="540" width="2" height="1" fill="#000"/><rect x="344" y="541" width="1" height="1" fill="#000"/><rect x="345" y="541" width="2" height="1" fill="#f00"/><rect x="347" y="541" width="1" height="1" fill="#000"/><rect x="343" y="542" width="1" height="1" fill="#000"/><rect x="344" y="542" width="4" height="1" fill="#f00"/><rect x="348" y="542" width="1" height="1" fill="#000"/><rect x="343" y="543" width="1" height="1" fill="#000"/><rect x="344" y="543" width="4" height="1" fill="#f00"/><rect x="348" y="543" width="1" height="1" fill="#000"/><rect x="344" y="544" width="1" height="1" fill="#000"/><rect x="345" y="544" width="2" height="1" fill="#f00"/><rect x="347" y="544" width="1" height="1" fill="#000"/><rect x="345" y="545" width="2" height="1" fill="#000"/><rect x="157" y="696" width="2" height="1" fill="#000"/><rect x="156" y="697" width="1" height="1" fill="#000"/><rect x="157" y="697" width="2" height="1" fill="#f00"/><rect x="159" y="697" width="1" height="1" fill="#000"/><rect x="155" y="698" width="1" height="1" fill="#000"/><rect x="156" y="698" width="4" height="1" fill="#f00"/><rect x="160" y="698" width="1" height="1" fill="#000"/><rect x="155" y="699" width="1" height="1" fill="#000"/><rect x="156" y="699" width="4" height="1" fill="#f00"/><rect x="160" y="699" width="1" height="1" fill="#000"/><rect x="156" y="700" width="1" height="1" fill="#000"/><rect x="157" y="700" width="2" height="1" fill="#f00"/><rect x="159" y="700" width="1" height="1" fill="#000"/><rect x="157" y="701" width="2" height="1" fill="#000"/><rect x="257" y="695" width="2" height="1" fill="#000"/><rect x="256" y="696" width="1" height="1" fill="#000"/><rect x="257" y="696" width="2" height="1" fill="#f00"/><rect x="259" y="696" width="1" height="1" fill="#000"/><rect x="255" y="697" width="1" height="1" fill="#000"/><rect x="256" y="697" width="4" height="1" fill="#f00"/><rect x="260" y="697" width="1" height="1" fill="#000"/><rect x="255" y="698" width="1" height="1" fill="#000"/><rect x="256" y="698" width="4" height="1" fill="#f00"/><rect x="260" y="698" width="1" height="1" fill="#000"/><rect x="256" y="699" width="1" height="1" fill="#000"/><rect x="257" y="699" width="2" height="1" fill="#f00"/><rect x="259" y="699" width="1" height="1" fill="#000"/><rect x="257" y="700" width="2" height="1" fill="#000"/><rect x="165" y="929" width="2" height="1" fill="#000"/><rect x="164" y="930" width="1" height="1" fill="#000"/><rect x="165" y="930" width="2" height="1" fill="#f00"/><rect x="167" y="930" width="1" height="1" fill="#000"/><rect x="163" y="931" width="1" height="1" fill="#000"/><rect x="164" y="931" width="4" height="1" fill="#f00"/><rect x="168" y="931" width="1" height="1" fill="#000"/><rect x="163" y="932" width="1" height="1" fill="#000"/><rect x="164" y="932" width="4" height="1" fill="#f00"/><rect x="168" y="932" width="1" height="1" fill="#000"/><rect x="164" y="933" width="1" height="1" fill="#000"/><rect x="165" y="933" width="2" height="1" fill="#f00"/><rect x="167" y="933" width="1" height="1" fill="#000"/><rect x="165" y="934" width="2" height="1" fill="#000"/><rect x="259" y="929" width="2" height="1" fill="#000"/><rect x="258" y="930" width="1" height="1" fill="#000"/><rect x="259" y="930" width="2" height="1" fill="#f00"/><rect x="261" y="930" width="1" height="1" fill="#000"/><rect x="257" y="931" width="1" height="1" fill="#000"/><rect x="258" y="931" width="4" height="1" fill="#f00"/><rect x="262" y="931" width="1" height="1" fill="#000"/><rect x="257" y="932" width="1" height="1" fill="#000"/><rect x="258" y="932" width="4" height="1" fill="#f00"/><rect x="262" y="932" width="1" height="1" fill="#000"/><rect x="258" y="933" width="1" height="1" fill="#000"/><rect x="259" y="933" width="2" height="1" fill="#f00"/><rect x="261" y="933" width="1" height="1" fill="#000"/><rect x="259" y="934" width="2" height="1" fill="#000"/><rect x="546" y="165" width="2" height="1" fill="#000"/><rect x="545" y="166" width="1" height="1" fill="#000"/><rect x="546" y="166" width="2" height="1" fill="#f00"/><rect x="548" y="166" width="1" height="1" fill="#000"/><rect x="544" y="167" width="1" height="1" fill="#000"/><rect x="545" y="167" width="4" height="1" fill="#f00"/><rect x="549" y="167" width="1" height="1" fill="#000"/><rect x="544" y="168" width="1" height="1" fill="#000"/><rect x="545" y="168" width="4" height="1" fill="#f00"/><rect x="549" y="168" width="1" height="1" fill="#000"/><rect x="545" y="169" width="1" height="1" fill="#000"/><rect x="546" y="169" width="2" height="1" fill="#f00"/><rect x="548" y="169" width="1" height="1" fill="#000"/><rect x="546" y="170" width="2" height="1" fill="#000"/><rect x="437" y="306" width="2" height="1" fill="#000"/><rect x="436" y="307" width="1" height="1" fill="#000"/><rect x="437" y="307" width="2" height="1" fill="#f00"/><rect x="439" y="307" width="1" height="1" fill="#000"/><rect x="435" y="308" width="1" height="1" fill="#000"/><rect x="436" y="308" width="4" height="1" fill="#f00"/><rect x="440" y="308" width="1" height="1" fill="#000"/><rect x="435" y="309" width="1" height="1" fill="#000"/><rect x="436" y="309" width="4" height="1" fill="#f00"/><rect x="440" y="309" width="1" height="1" fill="#000"/><rect x="436" y="310" width="1" height="1" fill="#000"/><rect x="437" y="310" width="2" height="1" fill="#f00"/><rect x="439" y="310" width="1" height="1" fill="#000"/><rect x="437" y="311" width="2" height="1" fill="#000"/><rect x="650" y="302" width="2" height="1" fill="#000"/><rect x="649" y="303" width="1" height="1" fill="#000"/><rect x="650" y="303" width="2" height="1" fill="#f00"/><rect x="652" y="303" width="1" height="1" fill="#000"/><rect x="648" y="304" width="1" height="1" fill="#000"/><rect x="649" y="304" width="4" height="1" fill="#f00"/><rect x="653" y="304" width="1" height="1" fill="#000"/><rect x="648" y="305" width="1" height="1" fill="#000"/><rect x="649" y="305" width="4" height="1" fill="#f00"/><rect x="653" y="305" width="1" height="1" fill="#000"/><rect x="649" y="306" width="1" height="1" fill="#000"/><rect x="650" y="306" width="2" height="1" fill="#f00"/><rect x="652" y="306" width="1" height="1" fill="#000"/><rect x="650" y="307" width="2" height="1" fill="#000"/><rect x="505" y="370" width="2" height="1" fill="#000"/><rect x="504" y="371" width="1" height="1" fill="#000"/><rect x="505" y="371" width="2" height="1" fill="#f00"/><rect x="507" y="371" width="1" height="1" fill="#000"/><rect x="503" y="372" width="1" height="1" fill="#000"/><rect x="504" y="372" width="4" height="1" fill="#f00"/><rect x="508" y="372" width="1" height="1" fill="#000"/><rect x="503" y="373" width="1" height="1" fill="#000"/><rect x="504" y="373" width="4" height="1" fill="#f00"/><rect x="508" y="373" width="1" height="1" fill="#000"/><rect x="504" y="374" width="1" height="1" fill="#000"/><rect x="505" y="374" width="2" height="1" fill="#f00"/><rect x="507" y="374" width="1" height="1" fill="#000"/><rect x="505" y="375" width="2" height="1" fill="#000"/><rect x="587" y="369" width="2" height="1" fill="#000"/><rect x="586" y="370" width="1" height="1" fill="#000"/><rect x="587" y="370" width="2" height="1" fill="#f00"/><rect x="589" y="370" width="1" height="1" fill="#000"/><rect x="585" y="371" width="1" height="1" fill="#000"/><rect x="586" y="371" width="4" height="1" fill="#f00"/><rect x="590" y="371" width="1" height="1" fill="#000"/><rect x="585" y="372" width="1" height="1" fill="#000"/><rect x="586" y="372" width="4" height="1" fill="#f00"/><rect x="590" y="372" width="1" height="1" fill="#000"/><rect x="586" y="373" width="1" height="1" fill="#000"/><rect x="587" y="373" width="2" height="1" fill="#f00"/><rect x="589" y="373" width="1" height="1" fill="#000"/><rect x="587" y="374" width="2" height="1" fill="#000"/><rect x="549" y="404" width="2" height="1" fill="#000"/><rect x="548" y="405" width="1" height="1" fill="#000"/><rect x="549" y="405" width="2" height="1" fill="#f00"/><rect x="551" y="405" width="1" height="1" fill="#000"/><rect x="547" y="406" width="1" height="1" fill="#000"/><rect x="548" y="406" width="4" height="1" fill="#f00"/><rect x="552" y="406" width="1" height="1" fill="#000"/><rect x="547" y="407" width="1" height="1" fill="#000"/><rect x="548" y="407" width="4" height="1" fill="#f00"/><rect x="552" y="407" width="1" height="1" fill="#000"/><rect x="548" y="408" width="1" height="1" fill="#000"/><rect x="549" y="408" width="2" height="1" fill="#f00"/><rect x="551" y="408" width="1" height="1" fill="#000"/><rect x="549" y="409" width="2" height="1" fill="#000"/><rect x="422" y="425" width="2" height="1" fill="#000"/><rect x="421" y="426" width="1" height="1" fill="#000"/><rect x="422" y="426" width="2" height="1" fill="#f00"/><rect x="424" y="426" width="1" height="1" fill="#000"/><rect x="420" y="427" width="1" height="1" fill="#000"/><rect x="421" y="427" width="4" height="1" fill="#f00"/><rect x="425" y="427" width="1" height="1" fill="#000"/><rect x="420" y="428" width="1" height="1" fill="#000"/><rect x="421" y="428" width="4" height="1" fill="#f00"/><rect x="425" y="428" width="1" height="1" fill="#000"/><rect x="421" y="429" width="1" height="1" fill="#000"/><rect x="422" y="429" width="2" height="1" fill="#f00"/><rect x="424" y="429" width="1" height="1" fill="#000"/><rect x="422" y="430" width="2" height="1" fill="#000"/><rect x="681" y="429" width="2" height="1" fill="#000"/><rect x="680" y="430" width="1" height="1" fill="#000"/><rect x="681" y="430" width="2" height="1" fill="#f00"/><rect x="683" y="430" width="1" height="1" fill="#000"/><rect x="679" y="431" width="1" height="1" fill="#000"/><rect x="680" y="431" width="4" height="1" fill="#f00"/><rect x="684" y="431" width="1" height="1" fill="#000"/><rect x="679" y="432" width="1" height="1" fill="#000"/><rect x="680" y="432" width="4" height="1" fill="#f00"/><rect x="684" y="432" width="1" height="1" fill="#000"/><rect x="680" y="433" width="1" height="1" fill="#000"/><rect x="681" y="433" width="2" height="1" fill="#f00"/><rect x="683" y="433" width="1" height="1" fill="#000"/><rect x="681" y="434" width="2" height="1" fill="#000"/><rect x="550" y="510" width="2" height="1" fill="#000"/><rect x="549" y="511" width="1" height="1" fill="#000"/><rect x="550" y="511" width="2" height="1" fill="#f00"/><rect x="552" y="511" width="1" height="1" fill="#000"/><rect x="548" y="512" width="1" height="1" fill="#000"/><rect x="549" y="512" width="4" height="1" fill="#f00"/><rect x="553" y="512" width="1" height="1" fill="#000"/><rect x="548" y="513" width="1" height="1" fill="#000"/><rect x="549" y="513" width="4" height="1" fill="#f00"/><rect x="553" y="513" width="1" height="1" fill="#000"/><rect x="549" y="514" width="1" height="1" fill="#000"/><rect x="550" y="514" width="2" height="1" fill="#f00"/><rect x="552" y="514" width="1" height="1" fill="#000"/><rect x="550" y="515" width="2" height="1" fill="#000"/><rect x="501" y="614" width="2" height="1" fill="#000"/><rect x="500" y="615" width="1" height="1" fill="#000"/><rect x="501" y="615" width="2" height="1" fill="#f00"/><rect x="503" y="615" width="1" height="1" fill="#000"/><rect x="499" y="616" width="1" height="1" fill="#000"/><rect x="500" y="616" width="4" height="1" fill="#f00"/><rect x="504" y="616" width="1" height="1" fill="#000"/><rect x="499" y="617" width="1" height="1" fill="#000"/><rect x="500" y="617" width="4" height="1" fill="#f00"/><rect x="504" y="617" width="1" height="1" fill="#000"/><rect x="500" y="618" width="1" height="1" fill="#000"/><rect x="501" y="618" width="2" height="1" fill="#f00"/><rect x="503" y="618" width="1" height="1" fill="#000"/><rect x="501" y="619" width="2" height="1" fill="#000"/><rect x="601" y="615" width="2" height="1" fill="#000"/><rect x="600" y="616" width="1" height="1" fill="#000"/><rect x="601" y="616" width="2" height="1" fill="#f00"/><rect x="603" y="616" width="1" height="1" fill="#000"/><rect x="599" y="617" width="1" height="1" fill="#000"/><rect x="600" y="617" width="4" height="1" fill="#f00"/><rect x="604" y="617" width="1" height="1" fill="#000"/><rect x="599" y="618" width="1" height="1" fill="#000"/><rect x="600" y="618" width="4" height="1" fill="#f00"/><rect x="604" y="618" width="1" height="1" fill="#000"/><rect x="600" y="619" width="1" height="1" fill="#000"/><rect x="601" y="619" width="2" height="1" fill="#f00"/><rect x="603" y="619" width="1" height="1" fill="#000"/><rect x="601" y="620" width="2" height="1" fill="#000"/><rect x="512" y="790" width="2" height="1" fill="#000"/><rect x="511" y="791" width="1" height="1" fill="#000"/><rect x="512" y="791" width="2" height="1" fill="#f00"/><rect x="514" y="791" width="1" height="1" fill="#000"/><rect x="510" y="792" width="1" height="1" fill="#000"/><rect x="511" y="792" width="4" height="1" fill="#f00"/><rect x="515" y="792" width="1" height="1" fill="#000"/><rect x="510" y="793" width="1" height="1" fill="#000"/><rect x="511" y="793" width="4" height="1" fill="#f00"/><rect x="515" y="793" width="1" height="1" fill="#000"/><rect x="511" y="794" width="1" height="1" fill="#000"/><rect x="512" y="794" width="2" height="1" fill="#f00"/><rect x="514" y="794" width="1" height="1" fill="#000"/><rect x="512" y="795" width="2" height="1" fill="#000"/><rect x="600" y="785" width="2" height="1" fill="#000"/><rect x="599" y="786" width="1" height="1" fill="#000"/><rect x="600" y="786" width="2" height="1" fill="#f00"/><rect x="602" y="786" width="1" height="1" fill="#000"/><rect x="598" y="787" width="1" height="1" fill="#000"/><rect x="599" y="787" width="4" height="1" fill="#f00"/><rect x="603" y="787" width="1" height="1" fill="#000"/><rect x="598" y="788" width="1" height="1" fill="#000"/><rect x="599" y="788" width="4" height="1" fill="#f00"/><rect x="603" y="788" width="1" height="1" fill="#000"/><rect x="599" y="789" width="1" height="1" fill="#000"/><rect x="600" y="789" width="2" height="1" fill="#f00"/><rect x="602" y="789" width="1" height="1" fill="#000"/><rect x="600" y="790" width="2" height="1" fill="#000"/><rect x="96" y="216" width="2" height="1" fill="#000"/><rect x="93" y="217" width="3" height="1" fill="#000"/><rect x="96" y="217" width="2" height="1" fill="#00f000"/><rect x="98" y="217" width="3" height="1" fill="#000"/><rect x="92" y="218" width="1" height="1" fill="#000"/><rect x="93" y="218" width="8" height="1" fill="#00f000"/><rect x="101" y="218" width="1" height="1" fill="#000"/><rect x="92" y="219" width="1" height="1" fill="#000"/><rect x="93" y="219" width="8" height="1" fill="#00f000"/><rect x="101" y="219" width="1" height="1" fill="#000"/><rect x="92" y="220" width="1" height="1" fill="#000"/><rect x="93" y="220" width="8" height="1" fill="#00f000"/><rect x="101" y="220" width="1" height="1" fill="#000"/><rect x="91" y="221" width="1" height="1" fill="#000"/><rect x="92" y="221" width="10" height="1" fill="#00f000"/><rect x="102" y="221" width="1" height="1" fill="#000"/><rect x="91" y="222" width="1" height="1" fill="#000"/><rect x="92" y="222" width="10" height="1" fill="#00f000"/><rect x="102" y="222" width="1" height="1" fill="#000"/><rect x="92" y="223" width="1" height="1" fill="#000"/><rect x="93" y="223" width="8" height="1" fill="#00f000"/><rect x="101" y="223" width="1" height="1" fill="#000"/><rect x="92" y="224" width="1" height="1" fill="#000"/><rect x="93" y="224" width="8" height="1" fill="#00f000"/><rect x="101" y="224" width="1" height="1" fill="#000"/><rect x="92" y="225" width="1" height="1" fill="#000"/><rect x="93" y="225" width="8" height="1" fill="#00f000"/><rect x="101" y="225" width="1" height="1" fill="#000"/><rect x="93" y="226" width="3" height="1" fill="#000"/><rect x="96" y="226" width="2" height="1" fill="#00f000"/><rect x="98" y="226" width="3" height="1" fill="#000"/><rect x="96" y="227" width="2" height="1" fill="#000"/>
</svg>

<div class="btn" style="left:777px;top:36px;width:221px;height:34px;background:#c4d6fb;box-shadow: inset 1px 1px 0 #fff, inset -1px -1px 0 #34487c, inset -2px -2px 0 #a0a4ac;"></div><div class="btn" style="left:777px;top:78px;width:221px;height:34px;background:#c4d6fb;box-shadow: inset 1px 1px 0 #fff, inset -1px -1px 0 #34487c, inset -2px -2px 0 #a0a4ac;"></div><div class="btn" style="left:777px;top:121px;width:221px;height:34px;background:#c4d6fb;box-shadow: inset 1px 1px 0 #fff, inset -1px -1px 0 #34487c, inset -2px -2px 0 #a0a4ac;"></div><div class="btn" style="left:777px;top:163px;width:221px;height:34px;background:#c4d6fb;box-shadow: inset 1px 1px 0 #fff, inset -1px -1px 0 #34487c, inset -2px -2px 0 #a0a4ac;"></div><div class="btn" style="left:1114px;top:26px;width:262px;height:34px;background:#c4d6fb;box-shadow: inset 1px 1px 0 #fff, inset -1px -1px 0 #34487c, inset -2px -2px 0 #a0a4ac;"></div><div class="btn" style="left:1114px;top:115px;width:262px;height:34px;background:#c4d6fb;box-shadow: inset 1px 1px 0 #fff, inset -1px -1px 0 #34487c, inset -2px -2px 0 #a0a4ac;"></div><div class="btn" style="left:1114px;top:154px;width:262px;height:34px;background:#c4d6fb;box-shadow: inset 1px 1px 0 #fff, inset -1px -1px 0 #34487c, inset -2px -2px 0 #a0a4ac;"></div><div class="btn pressed" style="left:1114px;top:192px;width:262px;height:34px;box-shadow: inset 1px 1px 0 #34487c, inset -1px -1px 0 #fff, inset 2px 2px 0 #a0a4ac;"></div><div class="btn pressed" style="left:836px;top:289px;width:221px;height:34px;box-shadow: inset 1px 1px 0 #34487c, inset -1px -1px 0 #fff, inset 2px 2px 0 #a0a4ac;"></div><div class="btn" style="left:1102px;top:289px;width:199px;height:34px;background:#c4d6fb;box-shadow: inset 1px 1px 0 #fff, inset -1px -1px 0 #34487c, inset -2px -2px 0 #a0a4ac;"></div>
<svg width="1920" height="1080" style="position:absolute;left:0;top:0" shape-rendering="crispEdges">
 <rect x="769" y="339" width="10" height="10" fill="none" stroke="#9a9a9a" stroke-width="1" transform="translate(0.5,0.5)"/>
 <rect x="769" y="362" width="10" height="10" fill="none" stroke="#9a9a9a" stroke-width="1" transform="translate(0.5,0.5)"/>
 <rect x="782.5" y="333.5" width="561" height="22" fill="none" stroke="#000" stroke-width="1" stroke-dasharray="1 1"/>
</svg>
<svg width="1920" height="1080" style="position:absolute;left:0;top:0"><text x="810.41" y="61.00" font-size="20.0" textLength="154.18" lengthAdjust="spacingAndGlyphs" fill="#000" stroke="#000" stroke-width="0.35">GROUP OF BLOOD</text><text x="865.40" y="103.00" font-size="20.0" textLength="43.61" lengthAdjust="spacingAndGlyphs" fill="#000" stroke="#000" stroke-width="0.35">FACE</text><text x="808.37" y="146.00" font-size="20.0" textLength="158.00" lengthAdjust="spacingAndGlyphs" fill="#000" stroke="#000" stroke-width="0.35">IRRIDO-DIANOSIS</text><text x="854.75" y="188.00" font-size="20.0" textLength="66.97" lengthAdjust="spacingAndGlyphs" fill="#000" stroke="#000" stroke-width="0.35">ZODIAC</text><text x="1207.42" y="51.00" font-size="20.0" textLength="75.04" lengthAdjust="spacingAndGlyphs" fill="#000" stroke="#000" stroke-width="0.35">Continue</text><text x="1212.39" y="140.00" font-size="20.0" textLength="65.17" lengthAdjust="spacingAndGlyphs" fill="#000" stroke="#000" stroke-width="0.35">Express</text><text x="1214.42" y="178.60" font-size="20.0" textLength="61.03" lengthAdjust="spacingAndGlyphs" fill="#000" stroke="#000" stroke-width="0.35">Normal</text><text x="1211.64" y="217.50" font-size="20.0" textLength="68.40" lengthAdjust="spacingAndGlyphs" fill="#000" stroke="#000" stroke-width="0.35">Detailed</text><text x="901.33" y="314.60" font-size="20.0" textLength="92.44" lengthAdjust="spacingAndGlyphs" fill="#000" stroke="#000" stroke-width="0.35">Complaints</text><text x="1161.58" y="314.60" font-size="20.0" textLength="79.79" lengthAdjust="spacingAndGlyphs" fill="#000" stroke="#000" stroke-width="0.35">Diagnosis</text><text x="783.82" y="352.00" font-size="20.0" textLength="20.84" lengthAdjust="spacingAndGlyphs" fill="#000" stroke="#000" stroke-width="0.35">27</text><text x="815.59" y="352.00" font-size="20.0" textLength="52.77" lengthAdjust="spacingAndGlyphs" fill="#000" stroke="#000" stroke-width="0.35">PAINS</text><text x="879.00" y="352.00" font-size="20.0" textLength="21.78" lengthAdjust="spacingAndGlyphs" fill="#000" stroke="#000" stroke-width="0.35">IN</text><text x="911.72" y="352.00" font-size="20.0" textLength="35.83" lengthAdjust="spacingAndGlyphs" fill="#000" stroke="#000" stroke-width="0.35">THE</text><text x="959.30" y="352.00" font-size="20.0" textLength="38.16" lengthAdjust="spacingAndGlyphs" fill="#000" stroke="#000" stroke-width="0.35">ARM</text><text x="1008.43" y="352.00" font-size="20.0" textLength="118.87" lengthAdjust="spacingAndGlyphs" fill="#000" stroke="#000" stroke-width="0.35">DEPARTMENT</text><text x="783.82" y="375.00" font-size="20.0" textLength="20.84" lengthAdjust="spacingAndGlyphs" fill="#000" stroke="#000" stroke-width="0.35">29</text><text x="815.55" y="375.00" font-size="20.0" textLength="41.97" lengthAdjust="spacingAndGlyphs" fill="#000" stroke="#000" stroke-width="0.35">PAIN</text><text x="868.35" y="375.00" font-size="20.0" textLength="21.18" lengthAdjust="spacingAndGlyphs" fill="#000" stroke="#000" stroke-width="0.35">IN</text><text x="900.72" y="375.00" font-size="20.0" textLength="35.63" lengthAdjust="spacingAndGlyphs" fill="#000" stroke="#000" stroke-width="0.35">THE</text><text x="947.41" y="375.00" font-size="20.0" textLength="62.13" lengthAdjust="spacingAndGlyphs" fill="#000" stroke="#000" stroke-width="0.35">HANDS</text></svg>
</body></html>
